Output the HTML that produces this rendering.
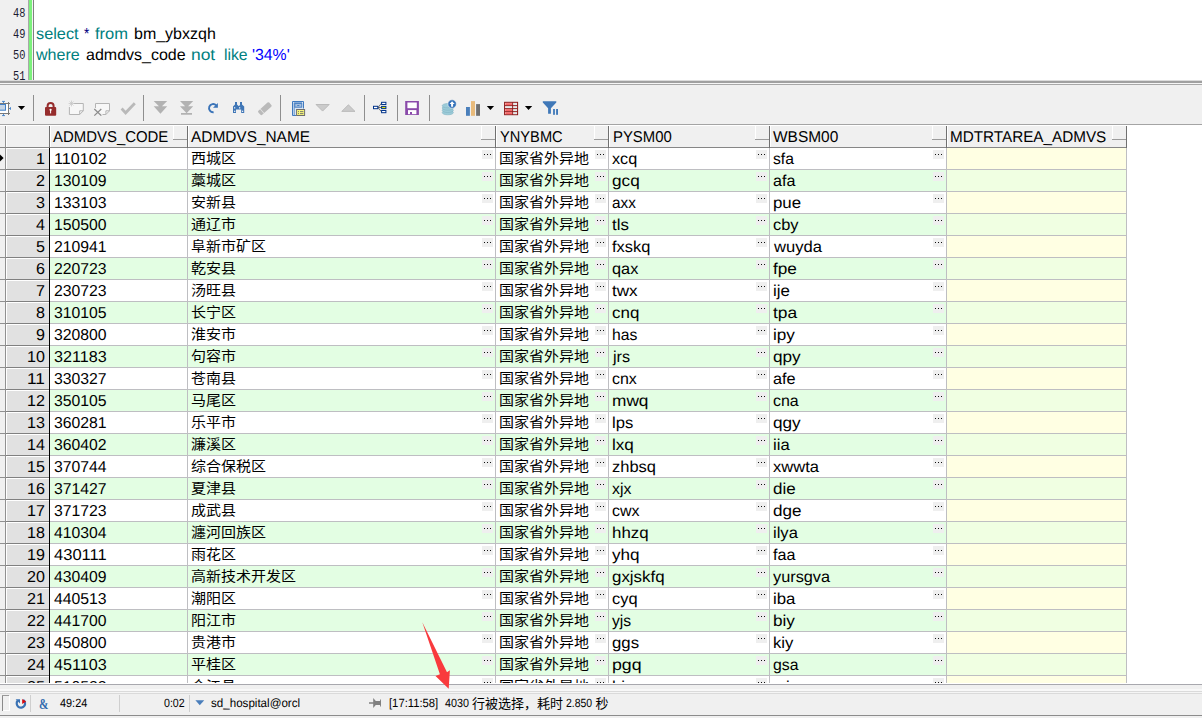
<!DOCTYPE html>
<html lang="zh-CN"><head><meta charset="utf-8"><title>SQL Window</title><style>
html,body{margin:0;padding:0}
body{width:1202px;height:718px;position:relative;overflow:hidden;background:#f0f0f0;font-family:"Liberation Sans","Noto Sans CJK SC",sans-serif}
div,span,svg{position:absolute;display:block}
.t{white-space:nowrap;transform-origin:0 75%}
.m{font-family:"Liberation Mono",monospace;font-size:10px;line-height:12px;color:#1a1a30;transform:scale(1.03,1.2);transform-origin:0 100%}
</style></head><body>
<div style="left:0px;top:0px;width:28px;height:80px;background:#f0f0f0;"></div>
<div style="left:28px;top:0px;width:1px;height:80px;background:#a8a8a8;"></div>
<div style="left:29px;top:0px;width:3px;height:80px;background:#7cf07c;"></div>
<div style="left:32px;top:0px;width:1px;height:80px;background:#f4f4f4;"></div>
<div style="left:33px;top:0px;width:1px;height:80px;background:#808080;"></div>
<div style="left:34px;top:0px;width:1168px;height:80px;background:#fff;"></div>
<span class="t m" style="left:12.6px;top:10.40px">48</span>
<span class="t m" style="left:12.6px;top:31.40px">49</span>
<span class="t m" style="left:12.6px;top:52.40px">50</span>
<span class="t m" style="left:12.6px;top:73.40px">51</span>
<span class="t" style="left:36.10px;top:23px;font-size:16px;line-height:22px;color:#008080;transform:scaleX(1.0180) rotate(.05deg)">select</span>
<span class="t" style="left:83.90px;top:23px;font-size:16px;line-height:22px;color:#000080;transform:scaleX(0.8480) rotate(.05deg)">*</span>
<span class="t" style="left:94.80px;top:23px;font-size:16px;line-height:22px;color:#008080;transform:scaleX(1.0312) rotate(.05deg)">from</span>
<span class="t" style="left:133.80px;top:23px;font-size:16px;line-height:22px;color:#000;transform:scaleX(0.9994) rotate(.05deg)">bm_ybxzqh</span>
<span class="t" style="left:36.35px;top:44px;font-size:16px;line-height:22px;color:#008080;transform:scaleX(1.0034) rotate(.05deg)">where</span>
<span class="t" style="left:85.60px;top:44px;font-size:16px;line-height:22px;color:#000;transform:scaleX(1.0000) rotate(.05deg)">admdvs_code</span>
<span class="t" style="left:190.60px;top:44px;font-size:16px;line-height:22px;color:#008080;transform:scaleX(1.0876) rotate(.05deg)">not</span>
<span class="t" style="left:223.50px;top:44px;font-size:16px;line-height:22px;color:#008080;transform:scaleX(0.9833) rotate(.05deg)">like</span>
<span class="t" style="left:252.30px;top:44px;font-size:16px;line-height:22px;color:#0000ff;transform:scaleX(0.9882) rotate(.05deg)">&#x27;34%&#x27;</span>
<div style="left:0px;top:80px;width:1202px;height:1px;background:#dcdcdc;"></div>
<div style="left:0px;top:81px;width:1202px;height:2px;background:#a0a0a0;"></div>
<div style="left:0px;top:83px;width:1202px;height:1px;background:#f6f6f6;"></div>
<div style="left:0px;top:84px;width:1202px;height:1px;background:#a8a8a8;"></div>
<div style="left:0px;top:85px;width:1202px;height:39px;background:#f0f0f0;"></div>
<div style="left:33px;top:95px;width:1px;height:26px;background:#8e8e8e;"></div>
<div style="left:143px;top:95px;width:1px;height:26px;background:#8e8e8e;"></div>
<div style="left:280px;top:95px;width:1px;height:26px;background:#8e8e8e;"></div>
<div style="left:364px;top:95px;width:1px;height:26px;background:#8e8e8e;"></div>
<div style="left:397px;top:95px;width:1px;height:26px;background:#8e8e8e;"></div>
<div style="left:429px;top:95px;width:1px;height:26px;background:#8e8e8e;"></div>
<svg style="left:0;top:85px" width="600" height="39" viewBox="0 85 600 39">
<!-- fit icon (cut) -->
<rect x="-3" y="103.5" width="11.5" height="10" fill="#fff" stroke="#7a7a7a" stroke-width="1"/>
<path d="M8.5 102v13M0 103.5h10M0 113.5h10" stroke="#7a7a7a" stroke-width="1" fill="none"/>
<rect x="-3" y="104.5" width="8.5" height="5.7" fill="#c5d4e5" stroke="#3f7fc8" stroke-width="1"/>
<path d="M2 101.4h3M3.5 101.4v1.6M2 115.6h3M3.5 114v1.6M10.5 107.2v2.6M9 108.5h1.5" stroke="#3f7fc8" stroke-width="0.9" fill="none"/>
<path d="M17.9 106h7.2l-3.6 4.1z" fill="#000"/>
<!-- lock -->
<path d="M47.6 107.5v-1.6a3 3 0 0 1 6 0v1.6" fill="none" stroke="#962d2d" stroke-width="2"/>
<rect x="45" y="107" width="11.2" height="8.8" rx="1" fill="#962d2d"/>
<circle cx="50.6" cy="109.8" r="1.1" fill="#fff"/><rect x="50.1" y="110" width="1" height="3.4" fill="#fff"/>
<!-- new record (disabled) -->
<path d="M73.5 103.5h9.8v7.3l-3.6 3.7h-10.3v-7.5" fill="#f7f7f7" stroke="#b4b4b4" stroke-width="1"/>
<path d="M83.3 110.8h-3.6v3.7" fill="none" stroke="#b4b4b4" stroke-width="1"/>
<path d="M71.5 100.6v5.8M68.6 103.5h5.8M69.5 101.5l4 4M73.5 101.5l-4 4" stroke="#c4c4c4" stroke-width="0.7"/>
<!-- delete record (disabled) -->
<path d="M95.5 108v-4.5h14v7.3l-3.6 3.7h-3.4" fill="#f7f7f7" stroke="#b4b4b4" stroke-width="1"/>
<path d="M109.5 110.8h-3.6v3.7" fill="none" stroke="#b4b4b4" stroke-width="1"/>
<path d="M94.3 109l7 6.6M101.3 109l-7 6.6" stroke="#8c8c8c" stroke-width="1.3" fill="none"/>
<!-- check -->
<path d="M120.6 109.6l2-2 3 3.2 8.2-8.6 2 2-10.2 10.8z" fill="#b9b9b9"/>
<!-- double down -->
<path d="M153.7 101h13.5l-6.75 6.8zM153.7 106.3h13.5l-6.75 7.4z" fill="#b2b2b2"/>
<path d="M180 101h13.2l-6.6 6.8zM180 106.3h13.2l-6.6 7zM181 112.9h11v1.9h-11z" fill="#b2b2b2"/>
<!-- refresh -->
<path d="M213.6 112.2a4.1 4.1 0 1 1 2.6-6.8" fill="none" stroke="#3b74b8" stroke-width="1.9"/>
<path d="M217.9 102.9v4.9h-4.9z" fill="#3b74b8"/>
<!-- binoculars -->
<path d="M235 102h2v2.4l1.6 1.6h0.4l1-1 0 0V102h2v2.4l2.2 2.2V113h-3v-3.4h-5.2V113h-3v-6.4l2-2.2z" fill="#3f76b6"/>
<rect x="234.1" y="110.7" width="1.2" height="1.2" fill="#fff"/><rect x="242" y="110.7" width="1.2" height="1.2" fill="#fff"/>
<rect x="234.2" y="107" width="1" height="1.6" fill="#e8eef6"/><rect x="239.2" y="107" width="1" height="1.6" fill="#e8eef6"/>
<!-- eraser -->
<g transform="rotate(-42 265 108.7)"><rect x="257.6" y="105.8" width="14.6" height="5.6" rx="1.2" fill="#bababa"/><rect x="260.8" y="105.8" width="0.8" height="5.6" fill="#e6e6e6"/></g>
<!-- single record view -->
<path d="M303.5 108.5v-7h-11v14h3.5" fill="#dbe6f3" stroke="#3f7ac0" stroke-width="1"/>
<path d="M294.2 115v-12.2h7.8" fill="none" stroke="#3f7ac0" stroke-width="0.8"/>
<rect x="294.8" y="103.6" width="7" height="3.6" fill="#a9c1de" stroke="#3f7ac0" stroke-width="0.9"/>
<rect x="297.2" y="105" width="2.2" height="0.9" fill="#3f7ac0"/>
<rect x="296.6" y="109.5" width="8" height="6" fill="#f6f67c" stroke="#6e6e6e" stroke-width="1"/>
<path d="M298 111.6h1M300 111.6h3.4M298 113.6h1M300 113.6h3.4" stroke="#6e6e6e" stroke-width="0.9"/>
<!-- triangles -->
<path d="M316 104.5h13.2l-6.6 6.6z" fill="#cbcbcb" stroke="#b2b2b2" stroke-width="0.8"/>
<path d="M341.8 111.4h13.2l-6.6-6.6z" fill="#cbcbcb" stroke="#b2b2b2" stroke-width="0.8"/>
<!-- tree -->
<path d="M378 107.5l3.4-4.2M378 107.5h3.4M378 107.5l3.4 4.2" stroke="#5a5a5a" stroke-width="0.9" fill="none"/>
<rect x="373.5" y="106.3" width="4.3" height="2.4" fill="#fff" stroke="#00338a" stroke-width="1"/>
<rect x="381.6" y="102.3" width="4.3" height="2.2" fill="#fff" stroke="#00338a" stroke-width="1"/>
<rect x="381.6" y="106.4" width="4.3" height="2.2" fill="#e8e800" stroke="#00338a" stroke-width="1"/>
<rect x="381.6" y="110.5" width="4.3" height="2.2" fill="#fff" stroke="#00338a" stroke-width="1"/>
<!-- save -->
<rect x="405.2" y="101" width="13.7" height="14" fill="#8a4aaa"/>
<rect x="407.4" y="102.5" width="9.4" height="5.7" fill="#fff"/>
<rect x="408" y="110.1" width="8.4" height="4.1" fill="#fff"/>
<rect x="410" y="112" width="2" height="2.2" fill="#8a4aaa"/>
<!-- db upload -->
<g fill="#9ccbd8" stroke="#7fb3c4" stroke-width="0.6"><ellipse cx="447.8" cy="112.6" rx="5.6" ry="2.2"/><ellipse cx="447.8" cy="110.3" rx="5.6" ry="2.2"/><ellipse cx="447.8" cy="108" rx="5.6" ry="2.2"/><ellipse cx="447.8" cy="105.7" rx="5.6" ry="2.2"/></g>
<circle cx="452.1" cy="104" r="4.2" fill="#2f6fb8" stroke="#f0f0f0" stroke-width="0.6"/>
<path d="M452.1 101.2l2.6 2.8h-1.6v2.8h-2v-2.8h-1.6z" fill="#fff"/>
<!-- bar chart -->
<rect x="466" y="107" width="3.9" height="8.8" fill="#4a7fbb"/><rect x="471" y="101.1" width="4" height="14.7" fill="#e9bb7b"/><rect x="476.1" y="104.1" width="3.9" height="11.7" fill="#707070"/>
<path d="M486.8 105.9h7.3l-3.65 4.2z" fill="#000"/>
<!-- table -->
<rect x="504.6" y="102.3" width="13" height="12.4" fill="#f4e4e4" stroke="#8b1414" stroke-width="1"/>
<g fill="#f76464"><rect x="505.4" y="103.2" width="6.6" height="1.9"/><rect x="505.4" y="109.2" width="6.6" height="1.9"/><rect x="505.4" y="112.2" width="6.6" height="1.9"/></g>
<g fill="#e4ecec"><rect x="505.4" y="106.2" width="6.6" height="1.9"/><rect x="513.2" y="103.2" width="3.7" height="1.9"/><rect x="513.2" y="106.2" width="3.7" height="1.9"/><rect x="513.2" y="109.2" width="3.7" height="1.9"/><rect x="513.2" y="112.2" width="3.7" height="1.9"/></g>
<path d="M504.6 105.6h13M504.6 108.6h13M504.6 111.6h13M512.6 102.3v12.4" stroke="#8b1414" stroke-width="0.9"/>
<path d="M524.9 105.9h7.3l-3.65 4.2z" fill="#000"/>
<!-- filter -->
<path d="M542.8 101.2h13.5v1.2l-5.4 5.8v5.6h-2.8v-5.6l-5.3-5.8z" fill="#3f78b8"/>
<rect x="553.1" y="109" width="1.8" height="5.8" fill="#3f78b8"/><rect x="556.1" y="109" width="1.9" height="5.8" fill="#3f78b8"/>
</svg>

<div style="left:0px;top:124px;width:1202px;height:1px;background:#a4a4a4;"></div>
<div style="left:0px;top:125px;width:1202px;height:559px;background:#fff;"></div>
<div style="left:0px;top:125px;width:1127px;height:22px;background:#f0f0f0;"></div>
<div style="left:0px;top:125px;width:1127px;height:1px;background:#fff;"></div>
<div style="left:0px;top:147px;width:1127px;height:1px;background:#868686;"></div>
<div style="left:49px;top:126px;width:1px;height:22px;background:#707070;"></div>
<div style="left:50px;top:126px;width:1px;height:21px;background:#fff;"></div>
<div style="left:187px;top:126px;width:1px;height:22px;background:#707070;"></div>
<div style="left:188px;top:126px;width:1px;height:21px;background:#fff;"></div>
<div style="left:495px;top:126px;width:1px;height:22px;background:#707070;"></div>
<div style="left:496px;top:126px;width:1px;height:21px;background:#fff;"></div>
<div style="left:608px;top:126px;width:1px;height:22px;background:#707070;"></div>
<div style="left:609px;top:126px;width:1px;height:21px;background:#fff;"></div>
<div style="left:769px;top:126px;width:1px;height:22px;background:#707070;"></div>
<div style="left:770px;top:126px;width:1px;height:21px;background:#fff;"></div>
<div style="left:946px;top:126px;width:1px;height:22px;background:#707070;"></div>
<div style="left:947px;top:126px;width:1px;height:21px;background:#fff;"></div>
<div style="left:1126px;top:126px;width:1px;height:22px;background:#707070;"></div>
<div style="left:5px;top:126px;width:1px;height:558px;background:#909090;"></div>
<div style="left:6px;top:126px;width:1px;height:21px;background:#fff;"></div>
<div style="left:173px;top:126px;width:1px;height:13px;background:#fff;"></div>
<div style="left:173px;top:139px;width:14px;height:1px;background:#9c9c9c;"></div>
<div style="left:481px;top:126px;width:1px;height:13px;background:#fff;"></div>
<div style="left:481px;top:139px;width:14px;height:1px;background:#9c9c9c;"></div>
<div style="left:594px;top:126px;width:1px;height:13px;background:#fff;"></div>
<div style="left:594px;top:139px;width:14px;height:1px;background:#9c9c9c;"></div>
<div style="left:755px;top:126px;width:1px;height:13px;background:#fff;"></div>
<div style="left:755px;top:139px;width:14px;height:1px;background:#9c9c9c;"></div>
<div style="left:932px;top:126px;width:1px;height:13px;background:#fff;"></div>
<div style="left:932px;top:139px;width:14px;height:1px;background:#9c9c9c;"></div>
<div style="left:1112px;top:126px;width:1px;height:13px;background:#fff;"></div>
<div style="left:1112px;top:139px;width:14px;height:1px;background:#9c9c9c;"></div>
<span class="t" style="left:53.40px;top:126px;font-size:15.7px;line-height:21px;color:#000;transform:scaleX(0.9518) rotate(.05deg)">ADMDVS_CODE</span>
<span class="t" style="left:191.30px;top:126px;font-size:15.7px;line-height:21px;color:#000;transform:scaleX(0.9821) rotate(.05deg)">ADMDVS_NAME</span>
<span class="t" style="left:499.70px;top:126px;font-size:15.7px;line-height:21px;color:#000;transform:scaleX(0.9338) rotate(.05deg)">YNYBMC</span>
<span class="t" style="left:612.50px;top:126px;font-size:15.7px;line-height:21px;color:#000;transform:scaleX(0.9484) rotate(.05deg)">PYSM00</span>
<span class="t" style="left:773.40px;top:126px;font-size:15.7px;line-height:21px;color:#000;transform:scaleX(0.9857) rotate(.05deg)">WBSM00</span>
<span class="t" style="left:950.40px;top:126px;font-size:15.7px;line-height:21px;color:#000;transform:scaleX(0.9723) rotate(.05deg)">MDTRTAREA_ADMVS</span>
<div class="clip" style="left:0;top:148px;width:1202px;height:535px;overflow:hidden">
<div style="left:0px;top:0px;width:5px;height:21px;background:#f0f0f0;"></div>
<div style="left:6px;top:0px;width:43px;height:21px;background:#e1e1e1;"></div>
<div style="left:6px;top:0px;width:43px;height:1px;background:#fff;"></div>
<div style="left:6px;top:0px;width:1px;height:21px;background:#fff;"></div>
<div style="left:947px;top:0px;width:179px;height:21px;background:#ffffe3;"></div>
<div style="left:0px;top:21px;width:5px;height:1px;background:#909090;"></div>
<div style="left:6px;top:21px;width:43px;height:1px;background:#808080;"></div>
<div style="left:50px;top:21px;width:1077px;height:1px;background:#bebec2;"></div>
<span class="t" style="left:36.29px;top:0px;font-size:15.8px;line-height:21px;color:#000;transform:scaleX(1.0188) rotate(.05deg)">1</span>
<span class="t" style="left:54.00px;top:0px;font-size:15.8px;line-height:21px;color:#000;transform:scaleX(1.0218) rotate(.05deg)">110102</span>
<span class="t c" style="left:190.90px;top:0px;font-size:13.4px;line-height:21px;color:#000;letter-spacing:0px;transform:translateY(0px) scaleX(1.12)">西城区</span>
<span class="t c" style="left:499.40px;top:0px;font-size:13.4px;line-height:21px;color:#000;letter-spacing:0px;transform:translateY(0px) scaleX(1.12)">国家省外异地</span>
<span class="t" style="left:612.30px;top:0px;font-size:15.8px;line-height:21px;color:#000;transform:scaleX(1.0258) rotate(.05deg)">xcq</span>
<span class="t" style="left:773.40px;top:0px;font-size:15.8px;line-height:21px;color:#000;transform:scaleX(0.9924) rotate(.05deg)">sfa</span>
<div style="left:482px;top:2px;width:11px;height:9px;background:#efefef;"></div>
<div style="left:484px;top:6px;width:1.4px;height:1.4px;background:#111;"></div>
<div style="left:487px;top:6px;width:1.4px;height:1.4px;background:#111;"></div>
<div style="left:490px;top:6px;width:1.4px;height:1.4px;background:#111;"></div>
<div style="left:595px;top:2px;width:11px;height:9px;background:#efefef;"></div>
<div style="left:597px;top:6px;width:1.4px;height:1.4px;background:#111;"></div>
<div style="left:600px;top:6px;width:1.4px;height:1.4px;background:#111;"></div>
<div style="left:603px;top:6px;width:1.4px;height:1.4px;background:#111;"></div>
<div style="left:756px;top:2px;width:11px;height:9px;background:#efefef;"></div>
<div style="left:758px;top:6px;width:1.4px;height:1.4px;background:#111;"></div>
<div style="left:761px;top:6px;width:1.4px;height:1.4px;background:#111;"></div>
<div style="left:764px;top:6px;width:1.4px;height:1.4px;background:#111;"></div>
<div style="left:933px;top:2px;width:11px;height:9px;background:#efefef;"></div>
<div style="left:935px;top:6px;width:1.4px;height:1.4px;background:#111;"></div>
<div style="left:938px;top:6px;width:1.4px;height:1.4px;background:#111;"></div>
<div style="left:941px;top:6px;width:1.4px;height:1.4px;background:#111;"></div>
<div style="left:0px;top:22px;width:5px;height:21px;background:#f0f0f0;"></div>
<div style="left:6px;top:22px;width:43px;height:21px;background:#e1e1e1;"></div>
<div style="left:6px;top:22px;width:43px;height:1px;background:#fff;"></div>
<div style="left:6px;top:22px;width:1px;height:21px;background:#fff;"></div>
<div style="left:50px;top:22px;width:896px;height:21px;background:#e3fee3;"></div>
<div style="left:947px;top:22px;width:179px;height:21px;background:#f0ffe2;"></div>
<div style="left:0px;top:43px;width:5px;height:1px;background:#909090;"></div>
<div style="left:6px;top:43px;width:43px;height:1px;background:#808080;"></div>
<div style="left:50px;top:43px;width:1077px;height:1px;background:#bebec2;"></div>
<span class="t" style="left:36.29px;top:22px;font-size:15.8px;line-height:21px;color:#000;transform:scaleX(1.0188) rotate(.05deg)">2</span>
<span class="t" style="left:54.00px;top:22px;font-size:15.8px;line-height:21px;color:#000;transform:scaleX(0.9975) rotate(.05deg)">130109</span>
<span class="t c" style="left:190.90px;top:22px;font-size:13.4px;line-height:21px;color:#000;letter-spacing:0px;transform:translateY(0px) scaleX(1.12)">藁城区</span>
<span class="t c" style="left:499.40px;top:22px;font-size:13.4px;line-height:21px;color:#000;letter-spacing:0px;transform:translateY(0px) scaleX(1.12)">国家省外异地</span>
<span class="t" style="left:612.30px;top:22px;font-size:15.8px;line-height:21px;color:#000;transform:scaleX(1.0876) rotate(.05deg)">gcq</span>
<span class="t" style="left:773.40px;top:22px;font-size:15.8px;line-height:21px;color:#000;transform:scaleX(1.0185) rotate(.05deg)">afa</span>
<div style="left:482px;top:24px;width:11px;height:9px;background:#efefef;"></div>
<div style="left:484px;top:28px;width:1.4px;height:1.4px;background:#111;"></div>
<div style="left:487px;top:28px;width:1.4px;height:1.4px;background:#111;"></div>
<div style="left:490px;top:28px;width:1.4px;height:1.4px;background:#111;"></div>
<div style="left:595px;top:24px;width:11px;height:9px;background:#efefef;"></div>
<div style="left:597px;top:28px;width:1.4px;height:1.4px;background:#111;"></div>
<div style="left:600px;top:28px;width:1.4px;height:1.4px;background:#111;"></div>
<div style="left:603px;top:28px;width:1.4px;height:1.4px;background:#111;"></div>
<div style="left:756px;top:24px;width:11px;height:9px;background:#efefef;"></div>
<div style="left:758px;top:28px;width:1.4px;height:1.4px;background:#111;"></div>
<div style="left:761px;top:28px;width:1.4px;height:1.4px;background:#111;"></div>
<div style="left:764px;top:28px;width:1.4px;height:1.4px;background:#111;"></div>
<div style="left:933px;top:24px;width:11px;height:9px;background:#efefef;"></div>
<div style="left:935px;top:28px;width:1.4px;height:1.4px;background:#111;"></div>
<div style="left:938px;top:28px;width:1.4px;height:1.4px;background:#111;"></div>
<div style="left:941px;top:28px;width:1.4px;height:1.4px;background:#111;"></div>
<div style="left:0px;top:44px;width:5px;height:21px;background:#f0f0f0;"></div>
<div style="left:6px;top:44px;width:43px;height:21px;background:#e1e1e1;"></div>
<div style="left:6px;top:44px;width:43px;height:1px;background:#fff;"></div>
<div style="left:6px;top:44px;width:1px;height:21px;background:#fff;"></div>
<div style="left:947px;top:44px;width:179px;height:21px;background:#ffffe3;"></div>
<div style="left:0px;top:65px;width:5px;height:1px;background:#909090;"></div>
<div style="left:6px;top:65px;width:43px;height:1px;background:#808080;"></div>
<div style="left:50px;top:65px;width:1077px;height:1px;background:#bebec2;"></div>
<span class="t" style="left:36.29px;top:44px;font-size:15.8px;line-height:21px;color:#000;transform:scaleX(1.0188) rotate(.05deg)">3</span>
<span class="t" style="left:54.00px;top:44px;font-size:15.8px;line-height:21px;color:#000;transform:scaleX(0.9975) rotate(.05deg)">133103</span>
<span class="t c" style="left:190.90px;top:44px;font-size:13.4px;line-height:21px;color:#000;letter-spacing:0px;transform:translateY(0px) scaleX(1.12)">安新县</span>
<span class="t c" style="left:499.40px;top:44px;font-size:13.4px;line-height:21px;color:#000;letter-spacing:0px;transform:translateY(0px) scaleX(1.12)">国家省外异地</span>
<span class="t" style="left:612.30px;top:44px;font-size:15.8px;line-height:21px;color:#000;transform:scaleX(0.9701) rotate(.05deg)">axx</span>
<span class="t" style="left:773.40px;top:44px;font-size:15.8px;line-height:21px;color:#000;transform:scaleX(1.0670) rotate(.05deg)">pue</span>
<div style="left:482px;top:46px;width:11px;height:9px;background:#efefef;"></div>
<div style="left:484px;top:50px;width:1.4px;height:1.4px;background:#111;"></div>
<div style="left:487px;top:50px;width:1.4px;height:1.4px;background:#111;"></div>
<div style="left:490px;top:50px;width:1.4px;height:1.4px;background:#111;"></div>
<div style="left:595px;top:46px;width:11px;height:9px;background:#efefef;"></div>
<div style="left:597px;top:50px;width:1.4px;height:1.4px;background:#111;"></div>
<div style="left:600px;top:50px;width:1.4px;height:1.4px;background:#111;"></div>
<div style="left:603px;top:50px;width:1.4px;height:1.4px;background:#111;"></div>
<div style="left:756px;top:46px;width:11px;height:9px;background:#efefef;"></div>
<div style="left:758px;top:50px;width:1.4px;height:1.4px;background:#111;"></div>
<div style="left:761px;top:50px;width:1.4px;height:1.4px;background:#111;"></div>
<div style="left:764px;top:50px;width:1.4px;height:1.4px;background:#111;"></div>
<div style="left:933px;top:46px;width:11px;height:9px;background:#efefef;"></div>
<div style="left:935px;top:50px;width:1.4px;height:1.4px;background:#111;"></div>
<div style="left:938px;top:50px;width:1.4px;height:1.4px;background:#111;"></div>
<div style="left:941px;top:50px;width:1.4px;height:1.4px;background:#111;"></div>
<div style="left:0px;top:66px;width:5px;height:21px;background:#f0f0f0;"></div>
<div style="left:6px;top:66px;width:43px;height:21px;background:#e1e1e1;"></div>
<div style="left:6px;top:66px;width:43px;height:1px;background:#fff;"></div>
<div style="left:6px;top:66px;width:1px;height:21px;background:#fff;"></div>
<div style="left:50px;top:66px;width:896px;height:21px;background:#e3fee3;"></div>
<div style="left:947px;top:66px;width:179px;height:21px;background:#f0ffe2;"></div>
<div style="left:0px;top:87px;width:5px;height:1px;background:#909090;"></div>
<div style="left:6px;top:87px;width:43px;height:1px;background:#808080;"></div>
<div style="left:50px;top:87px;width:1077px;height:1px;background:#bebec2;"></div>
<span class="t" style="left:36.29px;top:66px;font-size:15.8px;line-height:21px;color:#000;transform:scaleX(1.0188) rotate(.05deg)">4</span>
<span class="t" style="left:54.00px;top:66px;font-size:15.8px;line-height:21px;color:#000;transform:scaleX(0.9975) rotate(.05deg)">150500</span>
<span class="t c" style="left:190.90px;top:66px;font-size:13.4px;line-height:21px;color:#000;letter-spacing:0px;transform:translateY(0px) scaleX(1.12)">通辽市</span>
<span class="t c" style="left:499.40px;top:66px;font-size:13.4px;line-height:21px;color:#000;letter-spacing:0px;transform:translateY(0px) scaleX(1.12)">国家省外异地</span>
<span class="t" style="left:612.30px;top:66px;font-size:15.8px;line-height:21px;color:#000;transform:scaleX(1.0681) rotate(.05deg)">tls</span>
<span class="t" style="left:773.40px;top:66px;font-size:15.8px;line-height:21px;color:#000;transform:scaleX(1.0395) rotate(.05deg)">cby</span>
<div style="left:482px;top:68px;width:11px;height:9px;background:#efefef;"></div>
<div style="left:484px;top:72px;width:1.4px;height:1.4px;background:#111;"></div>
<div style="left:487px;top:72px;width:1.4px;height:1.4px;background:#111;"></div>
<div style="left:490px;top:72px;width:1.4px;height:1.4px;background:#111;"></div>
<div style="left:595px;top:68px;width:11px;height:9px;background:#efefef;"></div>
<div style="left:597px;top:72px;width:1.4px;height:1.4px;background:#111;"></div>
<div style="left:600px;top:72px;width:1.4px;height:1.4px;background:#111;"></div>
<div style="left:603px;top:72px;width:1.4px;height:1.4px;background:#111;"></div>
<div style="left:756px;top:68px;width:11px;height:9px;background:#efefef;"></div>
<div style="left:758px;top:72px;width:1.4px;height:1.4px;background:#111;"></div>
<div style="left:761px;top:72px;width:1.4px;height:1.4px;background:#111;"></div>
<div style="left:764px;top:72px;width:1.4px;height:1.4px;background:#111;"></div>
<div style="left:933px;top:68px;width:11px;height:9px;background:#efefef;"></div>
<div style="left:935px;top:72px;width:1.4px;height:1.4px;background:#111;"></div>
<div style="left:938px;top:72px;width:1.4px;height:1.4px;background:#111;"></div>
<div style="left:941px;top:72px;width:1.4px;height:1.4px;background:#111;"></div>
<div style="left:0px;top:88px;width:5px;height:21px;background:#f0f0f0;"></div>
<div style="left:6px;top:88px;width:43px;height:21px;background:#e1e1e1;"></div>
<div style="left:6px;top:88px;width:43px;height:1px;background:#fff;"></div>
<div style="left:6px;top:88px;width:1px;height:21px;background:#fff;"></div>
<div style="left:947px;top:88px;width:179px;height:21px;background:#ffffe3;"></div>
<div style="left:0px;top:109px;width:5px;height:1px;background:#909090;"></div>
<div style="left:6px;top:109px;width:43px;height:1px;background:#808080;"></div>
<div style="left:50px;top:109px;width:1077px;height:1px;background:#bebec2;"></div>
<span class="t" style="left:36.29px;top:88px;font-size:15.8px;line-height:21px;color:#000;transform:scaleX(1.0188) rotate(.05deg)">5</span>
<span class="t" style="left:54.00px;top:88px;font-size:15.8px;line-height:21px;color:#000;transform:scaleX(0.9975) rotate(.05deg)">210941</span>
<span class="t c" style="left:190.90px;top:88px;font-size:13.4px;line-height:21px;color:#000;letter-spacing:0px;transform:translateY(0px) scaleX(1.12)">阜新市矿区</span>
<span class="t c" style="left:499.40px;top:88px;font-size:13.4px;line-height:21px;color:#000;letter-spacing:0px;transform:translateY(0px) scaleX(1.12)">国家省外异地</span>
<span class="t" style="left:612.30px;top:88px;font-size:15.8px;line-height:21px;color:#000;transform:scaleX(1.0379) rotate(.05deg)">fxskq</span>
<span class="t" style="left:773.66px;top:88px;font-size:15.8px;line-height:21px;color:#000;transform:scaleX(1.0498) rotate(.05deg)">wuyda</span>
<div style="left:482px;top:90px;width:11px;height:9px;background:#efefef;"></div>
<div style="left:484px;top:94px;width:1.4px;height:1.4px;background:#111;"></div>
<div style="left:487px;top:94px;width:1.4px;height:1.4px;background:#111;"></div>
<div style="left:490px;top:94px;width:1.4px;height:1.4px;background:#111;"></div>
<div style="left:595px;top:90px;width:11px;height:9px;background:#efefef;"></div>
<div style="left:597px;top:94px;width:1.4px;height:1.4px;background:#111;"></div>
<div style="left:600px;top:94px;width:1.4px;height:1.4px;background:#111;"></div>
<div style="left:603px;top:94px;width:1.4px;height:1.4px;background:#111;"></div>
<div style="left:756px;top:90px;width:11px;height:9px;background:#efefef;"></div>
<div style="left:758px;top:94px;width:1.4px;height:1.4px;background:#111;"></div>
<div style="left:761px;top:94px;width:1.4px;height:1.4px;background:#111;"></div>
<div style="left:764px;top:94px;width:1.4px;height:1.4px;background:#111;"></div>
<div style="left:933px;top:90px;width:11px;height:9px;background:#efefef;"></div>
<div style="left:935px;top:94px;width:1.4px;height:1.4px;background:#111;"></div>
<div style="left:938px;top:94px;width:1.4px;height:1.4px;background:#111;"></div>
<div style="left:941px;top:94px;width:1.4px;height:1.4px;background:#111;"></div>
<div style="left:0px;top:110px;width:5px;height:21px;background:#f0f0f0;"></div>
<div style="left:6px;top:110px;width:43px;height:21px;background:#e1e1e1;"></div>
<div style="left:6px;top:110px;width:43px;height:1px;background:#fff;"></div>
<div style="left:6px;top:110px;width:1px;height:21px;background:#fff;"></div>
<div style="left:50px;top:110px;width:896px;height:21px;background:#e3fee3;"></div>
<div style="left:947px;top:110px;width:179px;height:21px;background:#f0ffe2;"></div>
<div style="left:0px;top:131px;width:5px;height:1px;background:#909090;"></div>
<div style="left:6px;top:131px;width:43px;height:1px;background:#808080;"></div>
<div style="left:50px;top:131px;width:1077px;height:1px;background:#bebec2;"></div>
<span class="t" style="left:36.29px;top:110px;font-size:15.8px;line-height:21px;color:#000;transform:scaleX(1.0188) rotate(.05deg)">6</span>
<span class="t" style="left:54.00px;top:110px;font-size:15.8px;line-height:21px;color:#000;transform:scaleX(0.9975) rotate(.05deg)">220723</span>
<span class="t c" style="left:190.90px;top:110px;font-size:13.4px;line-height:21px;color:#000;letter-spacing:0px;transform:translateY(0px) scaleX(1.12)">乾安县</span>
<span class="t c" style="left:499.40px;top:110px;font-size:13.4px;line-height:21px;color:#000;letter-spacing:0px;transform:translateY(0px) scaleX(1.12)">国家省外异地</span>
<span class="t" style="left:612.30px;top:110px;font-size:15.8px;line-height:21px;color:#000;transform:scaleX(1.0331) rotate(.05deg)">qax</span>
<span class="t" style="left:773.40px;top:110px;font-size:15.8px;line-height:21px;color:#000;transform:scaleX(1.0897) rotate(.05deg)">fpe</span>
<div style="left:482px;top:112px;width:11px;height:9px;background:#efefef;"></div>
<div style="left:484px;top:116px;width:1.4px;height:1.4px;background:#111;"></div>
<div style="left:487px;top:116px;width:1.4px;height:1.4px;background:#111;"></div>
<div style="left:490px;top:116px;width:1.4px;height:1.4px;background:#111;"></div>
<div style="left:595px;top:112px;width:11px;height:9px;background:#efefef;"></div>
<div style="left:597px;top:116px;width:1.4px;height:1.4px;background:#111;"></div>
<div style="left:600px;top:116px;width:1.4px;height:1.4px;background:#111;"></div>
<div style="left:603px;top:116px;width:1.4px;height:1.4px;background:#111;"></div>
<div style="left:756px;top:112px;width:11px;height:9px;background:#efefef;"></div>
<div style="left:758px;top:116px;width:1.4px;height:1.4px;background:#111;"></div>
<div style="left:761px;top:116px;width:1.4px;height:1.4px;background:#111;"></div>
<div style="left:764px;top:116px;width:1.4px;height:1.4px;background:#111;"></div>
<div style="left:933px;top:112px;width:11px;height:9px;background:#efefef;"></div>
<div style="left:935px;top:116px;width:1.4px;height:1.4px;background:#111;"></div>
<div style="left:938px;top:116px;width:1.4px;height:1.4px;background:#111;"></div>
<div style="left:941px;top:116px;width:1.4px;height:1.4px;background:#111;"></div>
<div style="left:0px;top:132px;width:5px;height:21px;background:#f0f0f0;"></div>
<div style="left:6px;top:132px;width:43px;height:21px;background:#e1e1e1;"></div>
<div style="left:6px;top:132px;width:43px;height:1px;background:#fff;"></div>
<div style="left:6px;top:132px;width:1px;height:21px;background:#fff;"></div>
<div style="left:947px;top:132px;width:179px;height:21px;background:#ffffe3;"></div>
<div style="left:0px;top:153px;width:5px;height:1px;background:#909090;"></div>
<div style="left:6px;top:153px;width:43px;height:1px;background:#808080;"></div>
<div style="left:50px;top:153px;width:1077px;height:1px;background:#bebec2;"></div>
<span class="t" style="left:36.29px;top:132px;font-size:15.8px;line-height:21px;color:#000;transform:scaleX(1.0188) rotate(.05deg)">7</span>
<span class="t" style="left:54.00px;top:132px;font-size:15.8px;line-height:21px;color:#000;transform:scaleX(0.9975) rotate(.05deg)">230723</span>
<span class="t c" style="left:190.90px;top:132px;font-size:13.4px;line-height:21px;color:#000;letter-spacing:0px;transform:translateY(0px) scaleX(1.12)">汤旺县</span>
<span class="t c" style="left:499.40px;top:132px;font-size:13.4px;line-height:21px;color:#000;letter-spacing:0px;transform:translateY(0px) scaleX(1.12)">国家省外异地</span>
<span class="t" style="left:612.30px;top:132px;font-size:15.8px;line-height:21px;color:#000;transform:scaleX(1.0811) rotate(.05deg)">twx</span>
<span class="t" style="left:773.40px;top:132px;font-size:15.8px;line-height:21px;color:#000;transform:scaleX(1.0696) rotate(.05deg)">ije</span>
<div style="left:482px;top:134px;width:11px;height:9px;background:#efefef;"></div>
<div style="left:484px;top:138px;width:1.4px;height:1.4px;background:#111;"></div>
<div style="left:487px;top:138px;width:1.4px;height:1.4px;background:#111;"></div>
<div style="left:490px;top:138px;width:1.4px;height:1.4px;background:#111;"></div>
<div style="left:595px;top:134px;width:11px;height:9px;background:#efefef;"></div>
<div style="left:597px;top:138px;width:1.4px;height:1.4px;background:#111;"></div>
<div style="left:600px;top:138px;width:1.4px;height:1.4px;background:#111;"></div>
<div style="left:603px;top:138px;width:1.4px;height:1.4px;background:#111;"></div>
<div style="left:756px;top:134px;width:11px;height:9px;background:#efefef;"></div>
<div style="left:758px;top:138px;width:1.4px;height:1.4px;background:#111;"></div>
<div style="left:761px;top:138px;width:1.4px;height:1.4px;background:#111;"></div>
<div style="left:764px;top:138px;width:1.4px;height:1.4px;background:#111;"></div>
<div style="left:933px;top:134px;width:11px;height:9px;background:#efefef;"></div>
<div style="left:935px;top:138px;width:1.4px;height:1.4px;background:#111;"></div>
<div style="left:938px;top:138px;width:1.4px;height:1.4px;background:#111;"></div>
<div style="left:941px;top:138px;width:1.4px;height:1.4px;background:#111;"></div>
<div style="left:0px;top:154px;width:5px;height:21px;background:#f0f0f0;"></div>
<div style="left:6px;top:154px;width:43px;height:21px;background:#e1e1e1;"></div>
<div style="left:6px;top:154px;width:43px;height:1px;background:#fff;"></div>
<div style="left:6px;top:154px;width:1px;height:21px;background:#fff;"></div>
<div style="left:50px;top:154px;width:896px;height:21px;background:#e3fee3;"></div>
<div style="left:947px;top:154px;width:179px;height:21px;background:#f0ffe2;"></div>
<div style="left:0px;top:175px;width:5px;height:1px;background:#909090;"></div>
<div style="left:6px;top:175px;width:43px;height:1px;background:#808080;"></div>
<div style="left:50px;top:175px;width:1077px;height:1px;background:#bebec2;"></div>
<span class="t" style="left:36.29px;top:154px;font-size:15.8px;line-height:21px;color:#000;transform:scaleX(1.0188) rotate(.05deg)">8</span>
<span class="t" style="left:54.00px;top:154px;font-size:15.8px;line-height:21px;color:#000;transform:scaleX(0.9975) rotate(.05deg)">310105</span>
<span class="t c" style="left:190.90px;top:154px;font-size:13.4px;line-height:21px;color:#000;letter-spacing:0px;transform:translateY(0px) scaleX(1.12)">长宁区</span>
<span class="t c" style="left:499.40px;top:154px;font-size:13.4px;line-height:21px;color:#000;letter-spacing:0px;transform:translateY(0px) scaleX(1.12)">国家省外异地</span>
<span class="t" style="left:612.30px;top:154px;font-size:15.8px;line-height:21px;color:#000;transform:scaleX(1.0727) rotate(.05deg)">cnq</span>
<span class="t" style="left:773.40px;top:154px;font-size:15.8px;line-height:21px;color:#000;transform:scaleX(1.0993) rotate(.05deg)">tpa</span>
<div style="left:482px;top:156px;width:11px;height:9px;background:#efefef;"></div>
<div style="left:484px;top:160px;width:1.4px;height:1.4px;background:#111;"></div>
<div style="left:487px;top:160px;width:1.4px;height:1.4px;background:#111;"></div>
<div style="left:490px;top:160px;width:1.4px;height:1.4px;background:#111;"></div>
<div style="left:595px;top:156px;width:11px;height:9px;background:#efefef;"></div>
<div style="left:597px;top:160px;width:1.4px;height:1.4px;background:#111;"></div>
<div style="left:600px;top:160px;width:1.4px;height:1.4px;background:#111;"></div>
<div style="left:603px;top:160px;width:1.4px;height:1.4px;background:#111;"></div>
<div style="left:756px;top:156px;width:11px;height:9px;background:#efefef;"></div>
<div style="left:758px;top:160px;width:1.4px;height:1.4px;background:#111;"></div>
<div style="left:761px;top:160px;width:1.4px;height:1.4px;background:#111;"></div>
<div style="left:764px;top:160px;width:1.4px;height:1.4px;background:#111;"></div>
<div style="left:933px;top:156px;width:11px;height:9px;background:#efefef;"></div>
<div style="left:935px;top:160px;width:1.4px;height:1.4px;background:#111;"></div>
<div style="left:938px;top:160px;width:1.4px;height:1.4px;background:#111;"></div>
<div style="left:941px;top:160px;width:1.4px;height:1.4px;background:#111;"></div>
<div style="left:0px;top:176px;width:5px;height:21px;background:#f0f0f0;"></div>
<div style="left:6px;top:176px;width:43px;height:21px;background:#e1e1e1;"></div>
<div style="left:6px;top:176px;width:43px;height:1px;background:#fff;"></div>
<div style="left:6px;top:176px;width:1px;height:21px;background:#fff;"></div>
<div style="left:947px;top:176px;width:179px;height:21px;background:#ffffe3;"></div>
<div style="left:0px;top:197px;width:5px;height:1px;background:#909090;"></div>
<div style="left:6px;top:197px;width:43px;height:1px;background:#808080;"></div>
<div style="left:50px;top:197px;width:1077px;height:1px;background:#bebec2;"></div>
<span class="t" style="left:36.29px;top:176px;font-size:15.8px;line-height:21px;color:#000;transform:scaleX(1.0188) rotate(.05deg)">9</span>
<span class="t" style="left:54.00px;top:176px;font-size:15.8px;line-height:21px;color:#000;transform:scaleX(0.9975) rotate(.05deg)">320800</span>
<span class="t c" style="left:190.90px;top:176px;font-size:13.4px;line-height:21px;color:#000;letter-spacing:0px;transform:translateY(0px) scaleX(1.12)">淮安市</span>
<span class="t c" style="left:499.40px;top:176px;font-size:13.4px;line-height:21px;color:#000;letter-spacing:0px;transform:translateY(0px) scaleX(1.12)">国家省外异地</span>
<span class="t" style="left:612.30px;top:176px;font-size:15.8px;line-height:21px;color:#000;transform:scaleX(0.9952) rotate(.05deg)">has</span>
<span class="t" style="left:773.40px;top:176px;font-size:15.8px;line-height:21px;color:#000;transform:scaleX(1.0854) rotate(.05deg)">ipy</span>
<div style="left:482px;top:178px;width:11px;height:9px;background:#efefef;"></div>
<div style="left:484px;top:182px;width:1.4px;height:1.4px;background:#111;"></div>
<div style="left:487px;top:182px;width:1.4px;height:1.4px;background:#111;"></div>
<div style="left:490px;top:182px;width:1.4px;height:1.4px;background:#111;"></div>
<div style="left:595px;top:178px;width:11px;height:9px;background:#efefef;"></div>
<div style="left:597px;top:182px;width:1.4px;height:1.4px;background:#111;"></div>
<div style="left:600px;top:182px;width:1.4px;height:1.4px;background:#111;"></div>
<div style="left:603px;top:182px;width:1.4px;height:1.4px;background:#111;"></div>
<div style="left:756px;top:178px;width:11px;height:9px;background:#efefef;"></div>
<div style="left:758px;top:182px;width:1.4px;height:1.4px;background:#111;"></div>
<div style="left:761px;top:182px;width:1.4px;height:1.4px;background:#111;"></div>
<div style="left:764px;top:182px;width:1.4px;height:1.4px;background:#111;"></div>
<div style="left:933px;top:178px;width:11px;height:9px;background:#efefef;"></div>
<div style="left:935px;top:182px;width:1.4px;height:1.4px;background:#111;"></div>
<div style="left:938px;top:182px;width:1.4px;height:1.4px;background:#111;"></div>
<div style="left:941px;top:182px;width:1.4px;height:1.4px;background:#111;"></div>
<div style="left:0px;top:198px;width:5px;height:21px;background:#f0f0f0;"></div>
<div style="left:6px;top:198px;width:43px;height:21px;background:#e1e1e1;"></div>
<div style="left:6px;top:198px;width:43px;height:1px;background:#fff;"></div>
<div style="left:6px;top:198px;width:1px;height:21px;background:#fff;"></div>
<div style="left:50px;top:198px;width:896px;height:21px;background:#e3fee3;"></div>
<div style="left:947px;top:198px;width:179px;height:21px;background:#f0ffe2;"></div>
<div style="left:0px;top:219px;width:5px;height:1px;background:#909090;"></div>
<div style="left:6px;top:219px;width:43px;height:1px;background:#808080;"></div>
<div style="left:50px;top:219px;width:1077px;height:1px;background:#bebec2;"></div>
<span class="t" style="left:27.37px;top:198px;font-size:15.8px;line-height:21px;color:#000;transform:scaleX(1.0188) rotate(.05deg)">10</span>
<span class="t" style="left:54.00px;top:198px;font-size:15.8px;line-height:21px;color:#000;transform:scaleX(1.0218) rotate(.05deg)">321183</span>
<span class="t c" style="left:190.90px;top:198px;font-size:13.4px;line-height:21px;color:#000;letter-spacing:0px;transform:translateY(0px) scaleX(1.12)">句容市</span>
<span class="t c" style="left:499.40px;top:198px;font-size:13.4px;line-height:21px;color:#000;letter-spacing:0px;transform:translateY(0px) scaleX(1.12)">国家省外异地</span>
<span class="t" style="left:612.81px;top:198px;font-size:15.8px;line-height:21px;color:#000;transform:scaleX(1.0248) rotate(.05deg)">jrs</span>
<span class="t" style="left:773.40px;top:198px;font-size:15.8px;line-height:21px;color:#000;transform:scaleX(1.0881) rotate(.05deg)">qpy</span>
<div style="left:482px;top:200px;width:11px;height:9px;background:#efefef;"></div>
<div style="left:484px;top:204px;width:1.4px;height:1.4px;background:#111;"></div>
<div style="left:487px;top:204px;width:1.4px;height:1.4px;background:#111;"></div>
<div style="left:490px;top:204px;width:1.4px;height:1.4px;background:#111;"></div>
<div style="left:595px;top:200px;width:11px;height:9px;background:#efefef;"></div>
<div style="left:597px;top:204px;width:1.4px;height:1.4px;background:#111;"></div>
<div style="left:600px;top:204px;width:1.4px;height:1.4px;background:#111;"></div>
<div style="left:603px;top:204px;width:1.4px;height:1.4px;background:#111;"></div>
<div style="left:756px;top:200px;width:11px;height:9px;background:#efefef;"></div>
<div style="left:758px;top:204px;width:1.4px;height:1.4px;background:#111;"></div>
<div style="left:761px;top:204px;width:1.4px;height:1.4px;background:#111;"></div>
<div style="left:764px;top:204px;width:1.4px;height:1.4px;background:#111;"></div>
<div style="left:933px;top:200px;width:11px;height:9px;background:#efefef;"></div>
<div style="left:935px;top:204px;width:1.4px;height:1.4px;background:#111;"></div>
<div style="left:938px;top:204px;width:1.4px;height:1.4px;background:#111;"></div>
<div style="left:941px;top:204px;width:1.4px;height:1.4px;background:#111;"></div>
<div style="left:0px;top:220px;width:5px;height:21px;background:#f0f0f0;"></div>
<div style="left:6px;top:220px;width:43px;height:21px;background:#e1e1e1;"></div>
<div style="left:6px;top:220px;width:43px;height:1px;background:#fff;"></div>
<div style="left:6px;top:220px;width:1px;height:21px;background:#fff;"></div>
<div style="left:947px;top:220px;width:179px;height:21px;background:#ffffe3;"></div>
<div style="left:0px;top:241px;width:5px;height:1px;background:#909090;"></div>
<div style="left:6px;top:241px;width:43px;height:1px;background:#808080;"></div>
<div style="left:50px;top:241px;width:1077px;height:1px;background:#bebec2;"></div>
<span class="t" style="left:27.46px;top:220px;font-size:15.8px;line-height:21px;color:#000;transform:scaleX(1.0916) rotate(.05deg)">11</span>
<span class="t" style="left:54.00px;top:220px;font-size:15.8px;line-height:21px;color:#000;transform:scaleX(0.9975) rotate(.05deg)">330327</span>
<span class="t c" style="left:190.90px;top:220px;font-size:13.4px;line-height:21px;color:#000;letter-spacing:0px;transform:translateY(0px) scaleX(1.12)">苍南县</span>
<span class="t c" style="left:499.40px;top:220px;font-size:13.4px;line-height:21px;color:#000;letter-spacing:0px;transform:translateY(0px) scaleX(1.12)">国家省外异地</span>
<span class="t" style="left:612.30px;top:220px;font-size:15.8px;line-height:21px;color:#000;transform:scaleX(1.0106) rotate(.05deg)">cnx</span>
<span class="t" style="left:773.40px;top:220px;font-size:15.8px;line-height:21px;color:#000;transform:scaleX(1.0292) rotate(.05deg)">afe</span>
<div style="left:482px;top:222px;width:11px;height:9px;background:#efefef;"></div>
<div style="left:484px;top:226px;width:1.4px;height:1.4px;background:#111;"></div>
<div style="left:487px;top:226px;width:1.4px;height:1.4px;background:#111;"></div>
<div style="left:490px;top:226px;width:1.4px;height:1.4px;background:#111;"></div>
<div style="left:595px;top:222px;width:11px;height:9px;background:#efefef;"></div>
<div style="left:597px;top:226px;width:1.4px;height:1.4px;background:#111;"></div>
<div style="left:600px;top:226px;width:1.4px;height:1.4px;background:#111;"></div>
<div style="left:603px;top:226px;width:1.4px;height:1.4px;background:#111;"></div>
<div style="left:756px;top:222px;width:11px;height:9px;background:#efefef;"></div>
<div style="left:758px;top:226px;width:1.4px;height:1.4px;background:#111;"></div>
<div style="left:761px;top:226px;width:1.4px;height:1.4px;background:#111;"></div>
<div style="left:764px;top:226px;width:1.4px;height:1.4px;background:#111;"></div>
<div style="left:933px;top:222px;width:11px;height:9px;background:#efefef;"></div>
<div style="left:935px;top:226px;width:1.4px;height:1.4px;background:#111;"></div>
<div style="left:938px;top:226px;width:1.4px;height:1.4px;background:#111;"></div>
<div style="left:941px;top:226px;width:1.4px;height:1.4px;background:#111;"></div>
<div style="left:0px;top:242px;width:5px;height:21px;background:#f0f0f0;"></div>
<div style="left:6px;top:242px;width:43px;height:21px;background:#e1e1e1;"></div>
<div style="left:6px;top:242px;width:43px;height:1px;background:#fff;"></div>
<div style="left:6px;top:242px;width:1px;height:21px;background:#fff;"></div>
<div style="left:50px;top:242px;width:896px;height:21px;background:#e3fee3;"></div>
<div style="left:947px;top:242px;width:179px;height:21px;background:#f0ffe2;"></div>
<div style="left:0px;top:263px;width:5px;height:1px;background:#909090;"></div>
<div style="left:6px;top:263px;width:43px;height:1px;background:#808080;"></div>
<div style="left:50px;top:263px;width:1077px;height:1px;background:#bebec2;"></div>
<span class="t" style="left:27.37px;top:242px;font-size:15.8px;line-height:21px;color:#000;transform:scaleX(1.0188) rotate(.05deg)">12</span>
<span class="t" style="left:54.00px;top:242px;font-size:15.8px;line-height:21px;color:#000;transform:scaleX(0.9975) rotate(.05deg)">350105</span>
<span class="t c" style="left:190.90px;top:242px;font-size:13.4px;line-height:21px;color:#000;letter-spacing:0px;transform:translateY(0px) scaleX(1.12)">马尾区</span>
<span class="t c" style="left:499.40px;top:242px;font-size:13.4px;line-height:21px;color:#000;letter-spacing:0px;transform:translateY(0px) scaleX(1.12)">国家省外异地</span>
<span class="t" style="left:612.30px;top:242px;font-size:15.8px;line-height:21px;color:#000;transform:scaleX(1.0937) rotate(.05deg)">mwq</span>
<span class="t" style="left:773.40px;top:242px;font-size:15.8px;line-height:21px;color:#000;transform:scaleX(1.0101) rotate(.05deg)">cna</span>
<div style="left:482px;top:244px;width:11px;height:9px;background:#efefef;"></div>
<div style="left:484px;top:248px;width:1.4px;height:1.4px;background:#111;"></div>
<div style="left:487px;top:248px;width:1.4px;height:1.4px;background:#111;"></div>
<div style="left:490px;top:248px;width:1.4px;height:1.4px;background:#111;"></div>
<div style="left:595px;top:244px;width:11px;height:9px;background:#efefef;"></div>
<div style="left:597px;top:248px;width:1.4px;height:1.4px;background:#111;"></div>
<div style="left:600px;top:248px;width:1.4px;height:1.4px;background:#111;"></div>
<div style="left:603px;top:248px;width:1.4px;height:1.4px;background:#111;"></div>
<div style="left:756px;top:244px;width:11px;height:9px;background:#efefef;"></div>
<div style="left:758px;top:248px;width:1.4px;height:1.4px;background:#111;"></div>
<div style="left:761px;top:248px;width:1.4px;height:1.4px;background:#111;"></div>
<div style="left:764px;top:248px;width:1.4px;height:1.4px;background:#111;"></div>
<div style="left:933px;top:244px;width:11px;height:9px;background:#efefef;"></div>
<div style="left:935px;top:248px;width:1.4px;height:1.4px;background:#111;"></div>
<div style="left:938px;top:248px;width:1.4px;height:1.4px;background:#111;"></div>
<div style="left:941px;top:248px;width:1.4px;height:1.4px;background:#111;"></div>
<div style="left:0px;top:264px;width:5px;height:21px;background:#f0f0f0;"></div>
<div style="left:6px;top:264px;width:43px;height:21px;background:#e1e1e1;"></div>
<div style="left:6px;top:264px;width:43px;height:1px;background:#fff;"></div>
<div style="left:6px;top:264px;width:1px;height:21px;background:#fff;"></div>
<div style="left:947px;top:264px;width:179px;height:21px;background:#ffffe3;"></div>
<div style="left:0px;top:285px;width:5px;height:1px;background:#909090;"></div>
<div style="left:6px;top:285px;width:43px;height:1px;background:#808080;"></div>
<div style="left:50px;top:285px;width:1077px;height:1px;background:#bebec2;"></div>
<span class="t" style="left:27.37px;top:264px;font-size:15.8px;line-height:21px;color:#000;transform:scaleX(1.0188) rotate(.05deg)">13</span>
<span class="t" style="left:54.00px;top:264px;font-size:15.8px;line-height:21px;color:#000;transform:scaleX(0.9975) rotate(.05deg)">360281</span>
<span class="t c" style="left:190.90px;top:264px;font-size:13.4px;line-height:21px;color:#000;letter-spacing:0px;transform:translateY(0px) scaleX(1.12)">乐平市</span>
<span class="t c" style="left:499.40px;top:264px;font-size:13.4px;line-height:21px;color:#000;letter-spacing:0px;transform:translateY(0px) scaleX(1.12)">国家省外异地</span>
<span class="t" style="left:612.30px;top:264px;font-size:15.8px;line-height:21px;color:#000;transform:scaleX(1.0530) rotate(.05deg)">lps</span>
<span class="t" style="left:773.40px;top:264px;font-size:15.8px;line-height:21px;color:#000;transform:scaleX(1.0881) rotate(.05deg)">qgy</span>
<div style="left:482px;top:266px;width:11px;height:9px;background:#efefef;"></div>
<div style="left:484px;top:270px;width:1.4px;height:1.4px;background:#111;"></div>
<div style="left:487px;top:270px;width:1.4px;height:1.4px;background:#111;"></div>
<div style="left:490px;top:270px;width:1.4px;height:1.4px;background:#111;"></div>
<div style="left:595px;top:266px;width:11px;height:9px;background:#efefef;"></div>
<div style="left:597px;top:270px;width:1.4px;height:1.4px;background:#111;"></div>
<div style="left:600px;top:270px;width:1.4px;height:1.4px;background:#111;"></div>
<div style="left:603px;top:270px;width:1.4px;height:1.4px;background:#111;"></div>
<div style="left:756px;top:266px;width:11px;height:9px;background:#efefef;"></div>
<div style="left:758px;top:270px;width:1.4px;height:1.4px;background:#111;"></div>
<div style="left:761px;top:270px;width:1.4px;height:1.4px;background:#111;"></div>
<div style="left:764px;top:270px;width:1.4px;height:1.4px;background:#111;"></div>
<div style="left:933px;top:266px;width:11px;height:9px;background:#efefef;"></div>
<div style="left:935px;top:270px;width:1.4px;height:1.4px;background:#111;"></div>
<div style="left:938px;top:270px;width:1.4px;height:1.4px;background:#111;"></div>
<div style="left:941px;top:270px;width:1.4px;height:1.4px;background:#111;"></div>
<div style="left:0px;top:286px;width:5px;height:21px;background:#f0f0f0;"></div>
<div style="left:6px;top:286px;width:43px;height:21px;background:#e1e1e1;"></div>
<div style="left:6px;top:286px;width:43px;height:1px;background:#fff;"></div>
<div style="left:6px;top:286px;width:1px;height:21px;background:#fff;"></div>
<div style="left:50px;top:286px;width:896px;height:21px;background:#e3fee3;"></div>
<div style="left:947px;top:286px;width:179px;height:21px;background:#f0ffe2;"></div>
<div style="left:0px;top:307px;width:5px;height:1px;background:#909090;"></div>
<div style="left:6px;top:307px;width:43px;height:1px;background:#808080;"></div>
<div style="left:50px;top:307px;width:1077px;height:1px;background:#bebec2;"></div>
<span class="t" style="left:27.37px;top:286px;font-size:15.8px;line-height:21px;color:#000;transform:scaleX(1.0188) rotate(.05deg)">14</span>
<span class="t" style="left:54.00px;top:286px;font-size:15.8px;line-height:21px;color:#000;transform:scaleX(0.9975) rotate(.05deg)">360402</span>
<span class="t c" style="left:190.90px;top:286px;font-size:13.4px;line-height:21px;color:#000;letter-spacing:0px;transform:translateY(0px) scaleX(1.12)">濂溪区</span>
<span class="t c" style="left:499.40px;top:286px;font-size:13.4px;line-height:21px;color:#000;letter-spacing:0px;transform:translateY(0px) scaleX(1.12)">国家省外异地</span>
<span class="t" style="left:612.30px;top:286px;font-size:15.8px;line-height:21px;color:#000;transform:scaleX(1.0822) rotate(.05deg)">lxq</span>
<span class="t" style="left:773.40px;top:286px;font-size:15.8px;line-height:21px;color:#000;transform:scaleX(1.0549) rotate(.05deg)">iia</span>
<div style="left:482px;top:288px;width:11px;height:9px;background:#efefef;"></div>
<div style="left:484px;top:292px;width:1.4px;height:1.4px;background:#111;"></div>
<div style="left:487px;top:292px;width:1.4px;height:1.4px;background:#111;"></div>
<div style="left:490px;top:292px;width:1.4px;height:1.4px;background:#111;"></div>
<div style="left:595px;top:288px;width:11px;height:9px;background:#efefef;"></div>
<div style="left:597px;top:292px;width:1.4px;height:1.4px;background:#111;"></div>
<div style="left:600px;top:292px;width:1.4px;height:1.4px;background:#111;"></div>
<div style="left:603px;top:292px;width:1.4px;height:1.4px;background:#111;"></div>
<div style="left:756px;top:288px;width:11px;height:9px;background:#efefef;"></div>
<div style="left:758px;top:292px;width:1.4px;height:1.4px;background:#111;"></div>
<div style="left:761px;top:292px;width:1.4px;height:1.4px;background:#111;"></div>
<div style="left:764px;top:292px;width:1.4px;height:1.4px;background:#111;"></div>
<div style="left:933px;top:288px;width:11px;height:9px;background:#efefef;"></div>
<div style="left:935px;top:292px;width:1.4px;height:1.4px;background:#111;"></div>
<div style="left:938px;top:292px;width:1.4px;height:1.4px;background:#111;"></div>
<div style="left:941px;top:292px;width:1.4px;height:1.4px;background:#111;"></div>
<div style="left:0px;top:308px;width:5px;height:21px;background:#f0f0f0;"></div>
<div style="left:6px;top:308px;width:43px;height:21px;background:#e1e1e1;"></div>
<div style="left:6px;top:308px;width:43px;height:1px;background:#fff;"></div>
<div style="left:6px;top:308px;width:1px;height:21px;background:#fff;"></div>
<div style="left:947px;top:308px;width:179px;height:21px;background:#ffffe3;"></div>
<div style="left:0px;top:329px;width:5px;height:1px;background:#909090;"></div>
<div style="left:6px;top:329px;width:43px;height:1px;background:#808080;"></div>
<div style="left:50px;top:329px;width:1077px;height:1px;background:#bebec2;"></div>
<span class="t" style="left:27.37px;top:308px;font-size:15.8px;line-height:21px;color:#000;transform:scaleX(1.0188) rotate(.05deg)">15</span>
<span class="t" style="left:54.00px;top:308px;font-size:15.8px;line-height:21px;color:#000;transform:scaleX(0.9975) rotate(.05deg)">370744</span>
<span class="t c" style="left:190.90px;top:308px;font-size:13.4px;line-height:21px;color:#000;letter-spacing:0px;transform:translateY(0px) scaleX(1.12)">综合保税区</span>
<span class="t c" style="left:499.40px;top:308px;font-size:13.4px;line-height:21px;color:#000;letter-spacing:0px;transform:translateY(0px) scaleX(1.12)">国家省外异地</span>
<span class="t" style="left:612.30px;top:308px;font-size:15.8px;line-height:21px;color:#000;transform:scaleX(1.0420) rotate(.05deg)">zhbsq</span>
<span class="t" style="left:773.40px;top:308px;font-size:15.8px;line-height:21px;color:#000;transform:scaleX(1.0466) rotate(.05deg)">xwwta</span>
<div style="left:482px;top:310px;width:11px;height:9px;background:#efefef;"></div>
<div style="left:484px;top:314px;width:1.4px;height:1.4px;background:#111;"></div>
<div style="left:487px;top:314px;width:1.4px;height:1.4px;background:#111;"></div>
<div style="left:490px;top:314px;width:1.4px;height:1.4px;background:#111;"></div>
<div style="left:595px;top:310px;width:11px;height:9px;background:#efefef;"></div>
<div style="left:597px;top:314px;width:1.4px;height:1.4px;background:#111;"></div>
<div style="left:600px;top:314px;width:1.4px;height:1.4px;background:#111;"></div>
<div style="left:603px;top:314px;width:1.4px;height:1.4px;background:#111;"></div>
<div style="left:756px;top:310px;width:11px;height:9px;background:#efefef;"></div>
<div style="left:758px;top:314px;width:1.4px;height:1.4px;background:#111;"></div>
<div style="left:761px;top:314px;width:1.4px;height:1.4px;background:#111;"></div>
<div style="left:764px;top:314px;width:1.4px;height:1.4px;background:#111;"></div>
<div style="left:933px;top:310px;width:11px;height:9px;background:#efefef;"></div>
<div style="left:935px;top:314px;width:1.4px;height:1.4px;background:#111;"></div>
<div style="left:938px;top:314px;width:1.4px;height:1.4px;background:#111;"></div>
<div style="left:941px;top:314px;width:1.4px;height:1.4px;background:#111;"></div>
<div style="left:0px;top:330px;width:5px;height:21px;background:#f0f0f0;"></div>
<div style="left:6px;top:330px;width:43px;height:21px;background:#e1e1e1;"></div>
<div style="left:6px;top:330px;width:43px;height:1px;background:#fff;"></div>
<div style="left:6px;top:330px;width:1px;height:21px;background:#fff;"></div>
<div style="left:50px;top:330px;width:896px;height:21px;background:#e3fee3;"></div>
<div style="left:947px;top:330px;width:179px;height:21px;background:#f0ffe2;"></div>
<div style="left:0px;top:351px;width:5px;height:1px;background:#909090;"></div>
<div style="left:6px;top:351px;width:43px;height:1px;background:#808080;"></div>
<div style="left:50px;top:351px;width:1077px;height:1px;background:#bebec2;"></div>
<span class="t" style="left:27.37px;top:330px;font-size:15.8px;line-height:21px;color:#000;transform:scaleX(1.0188) rotate(.05deg)">16</span>
<span class="t" style="left:54.00px;top:330px;font-size:15.8px;line-height:21px;color:#000;transform:scaleX(0.9975) rotate(.05deg)">371427</span>
<span class="t c" style="left:190.90px;top:330px;font-size:13.4px;line-height:21px;color:#000;letter-spacing:0px;transform:translateY(0px) scaleX(1.12)">夏津县</span>
<span class="t c" style="left:499.40px;top:330px;font-size:13.4px;line-height:21px;color:#000;letter-spacing:0px;transform:translateY(0px) scaleX(1.12)">国家省外异地</span>
<span class="t" style="left:612.30px;top:330px;font-size:15.8px;line-height:21px;color:#000;transform:scaleX(1.0035) rotate(.05deg)">xjx</span>
<span class="t" style="left:773.40px;top:330px;font-size:15.8px;line-height:21px;color:#000;transform:scaleX(1.0769) rotate(.05deg)">die</span>
<div style="left:482px;top:332px;width:11px;height:9px;background:#efefef;"></div>
<div style="left:484px;top:336px;width:1.4px;height:1.4px;background:#111;"></div>
<div style="left:487px;top:336px;width:1.4px;height:1.4px;background:#111;"></div>
<div style="left:490px;top:336px;width:1.4px;height:1.4px;background:#111;"></div>
<div style="left:595px;top:332px;width:11px;height:9px;background:#efefef;"></div>
<div style="left:597px;top:336px;width:1.4px;height:1.4px;background:#111;"></div>
<div style="left:600px;top:336px;width:1.4px;height:1.4px;background:#111;"></div>
<div style="left:603px;top:336px;width:1.4px;height:1.4px;background:#111;"></div>
<div style="left:756px;top:332px;width:11px;height:9px;background:#efefef;"></div>
<div style="left:758px;top:336px;width:1.4px;height:1.4px;background:#111;"></div>
<div style="left:761px;top:336px;width:1.4px;height:1.4px;background:#111;"></div>
<div style="left:764px;top:336px;width:1.4px;height:1.4px;background:#111;"></div>
<div style="left:933px;top:332px;width:11px;height:9px;background:#efefef;"></div>
<div style="left:935px;top:336px;width:1.4px;height:1.4px;background:#111;"></div>
<div style="left:938px;top:336px;width:1.4px;height:1.4px;background:#111;"></div>
<div style="left:941px;top:336px;width:1.4px;height:1.4px;background:#111;"></div>
<div style="left:0px;top:352px;width:5px;height:21px;background:#f0f0f0;"></div>
<div style="left:6px;top:352px;width:43px;height:21px;background:#e1e1e1;"></div>
<div style="left:6px;top:352px;width:43px;height:1px;background:#fff;"></div>
<div style="left:6px;top:352px;width:1px;height:21px;background:#fff;"></div>
<div style="left:947px;top:352px;width:179px;height:21px;background:#ffffe3;"></div>
<div style="left:0px;top:373px;width:5px;height:1px;background:#909090;"></div>
<div style="left:6px;top:373px;width:43px;height:1px;background:#808080;"></div>
<div style="left:50px;top:373px;width:1077px;height:1px;background:#bebec2;"></div>
<span class="t" style="left:27.37px;top:352px;font-size:15.8px;line-height:21px;color:#000;transform:scaleX(1.0188) rotate(.05deg)">17</span>
<span class="t" style="left:54.00px;top:352px;font-size:15.8px;line-height:21px;color:#000;transform:scaleX(0.9975) rotate(.05deg)">371723</span>
<span class="t c" style="left:190.90px;top:352px;font-size:13.4px;line-height:21px;color:#000;letter-spacing:0px;transform:translateY(0px) scaleX(1.12)">成武县</span>
<span class="t c" style="left:499.40px;top:352px;font-size:13.4px;line-height:21px;color:#000;letter-spacing:0px;transform:translateY(0px) scaleX(1.12)">国家省外异地</span>
<span class="t" style="left:612.30px;top:352px;font-size:15.8px;line-height:21px;color:#000;transform:scaleX(1.0137) rotate(.05deg)">cwx</span>
<span class="t" style="left:773.40px;top:352px;font-size:15.8px;line-height:21px;color:#000;transform:scaleX(1.0813) rotate(.05deg)">dge</span>
<div style="left:482px;top:354px;width:11px;height:9px;background:#efefef;"></div>
<div style="left:484px;top:358px;width:1.4px;height:1.4px;background:#111;"></div>
<div style="left:487px;top:358px;width:1.4px;height:1.4px;background:#111;"></div>
<div style="left:490px;top:358px;width:1.4px;height:1.4px;background:#111;"></div>
<div style="left:595px;top:354px;width:11px;height:9px;background:#efefef;"></div>
<div style="left:597px;top:358px;width:1.4px;height:1.4px;background:#111;"></div>
<div style="left:600px;top:358px;width:1.4px;height:1.4px;background:#111;"></div>
<div style="left:603px;top:358px;width:1.4px;height:1.4px;background:#111;"></div>
<div style="left:756px;top:354px;width:11px;height:9px;background:#efefef;"></div>
<div style="left:758px;top:358px;width:1.4px;height:1.4px;background:#111;"></div>
<div style="left:761px;top:358px;width:1.4px;height:1.4px;background:#111;"></div>
<div style="left:764px;top:358px;width:1.4px;height:1.4px;background:#111;"></div>
<div style="left:933px;top:354px;width:11px;height:9px;background:#efefef;"></div>
<div style="left:935px;top:358px;width:1.4px;height:1.4px;background:#111;"></div>
<div style="left:938px;top:358px;width:1.4px;height:1.4px;background:#111;"></div>
<div style="left:941px;top:358px;width:1.4px;height:1.4px;background:#111;"></div>
<div style="left:0px;top:374px;width:5px;height:21px;background:#f0f0f0;"></div>
<div style="left:6px;top:374px;width:43px;height:21px;background:#e1e1e1;"></div>
<div style="left:6px;top:374px;width:43px;height:1px;background:#fff;"></div>
<div style="left:6px;top:374px;width:1px;height:21px;background:#fff;"></div>
<div style="left:50px;top:374px;width:896px;height:21px;background:#e3fee3;"></div>
<div style="left:947px;top:374px;width:179px;height:21px;background:#f0ffe2;"></div>
<div style="left:0px;top:395px;width:5px;height:1px;background:#909090;"></div>
<div style="left:6px;top:395px;width:43px;height:1px;background:#808080;"></div>
<div style="left:50px;top:395px;width:1077px;height:1px;background:#bebec2;"></div>
<span class="t" style="left:27.37px;top:374px;font-size:15.8px;line-height:21px;color:#000;transform:scaleX(1.0188) rotate(.05deg)">18</span>
<span class="t" style="left:54.00px;top:374px;font-size:15.8px;line-height:21px;color:#000;transform:scaleX(0.9975) rotate(.05deg)">410304</span>
<span class="t c" style="left:190.90px;top:374px;font-size:13.4px;line-height:21px;color:#000;letter-spacing:0px;transform:translateY(0px) scaleX(1.12)">瀍河回族区</span>
<span class="t c" style="left:499.40px;top:374px;font-size:13.4px;line-height:21px;color:#000;letter-spacing:0px;transform:translateY(0px) scaleX(1.12)">国家省外异地</span>
<span class="t" style="left:612.30px;top:374px;font-size:15.8px;line-height:21px;color:#000;transform:scaleX(1.0673) rotate(.05deg)">hhzq</span>
<span class="t" style="left:773.40px;top:374px;font-size:15.8px;line-height:21px;color:#000;transform:scaleX(1.0479) rotate(.05deg)">ilya</span>
<div style="left:482px;top:376px;width:11px;height:9px;background:#efefef;"></div>
<div style="left:484px;top:380px;width:1.4px;height:1.4px;background:#111;"></div>
<div style="left:487px;top:380px;width:1.4px;height:1.4px;background:#111;"></div>
<div style="left:490px;top:380px;width:1.4px;height:1.4px;background:#111;"></div>
<div style="left:595px;top:376px;width:11px;height:9px;background:#efefef;"></div>
<div style="left:597px;top:380px;width:1.4px;height:1.4px;background:#111;"></div>
<div style="left:600px;top:380px;width:1.4px;height:1.4px;background:#111;"></div>
<div style="left:603px;top:380px;width:1.4px;height:1.4px;background:#111;"></div>
<div style="left:756px;top:376px;width:11px;height:9px;background:#efefef;"></div>
<div style="left:758px;top:380px;width:1.4px;height:1.4px;background:#111;"></div>
<div style="left:761px;top:380px;width:1.4px;height:1.4px;background:#111;"></div>
<div style="left:764px;top:380px;width:1.4px;height:1.4px;background:#111;"></div>
<div style="left:933px;top:376px;width:11px;height:9px;background:#efefef;"></div>
<div style="left:935px;top:380px;width:1.4px;height:1.4px;background:#111;"></div>
<div style="left:938px;top:380px;width:1.4px;height:1.4px;background:#111;"></div>
<div style="left:941px;top:380px;width:1.4px;height:1.4px;background:#111;"></div>
<div style="left:0px;top:396px;width:5px;height:21px;background:#f0f0f0;"></div>
<div style="left:6px;top:396px;width:43px;height:21px;background:#e1e1e1;"></div>
<div style="left:6px;top:396px;width:43px;height:1px;background:#fff;"></div>
<div style="left:6px;top:396px;width:1px;height:21px;background:#fff;"></div>
<div style="left:947px;top:396px;width:179px;height:21px;background:#ffffe3;"></div>
<div style="left:0px;top:417px;width:5px;height:1px;background:#909090;"></div>
<div style="left:6px;top:417px;width:43px;height:1px;background:#808080;"></div>
<div style="left:50px;top:417px;width:1077px;height:1px;background:#bebec2;"></div>
<span class="t" style="left:27.37px;top:396px;font-size:15.8px;line-height:21px;color:#000;transform:scaleX(1.0188) rotate(.05deg)">19</span>
<span class="t" style="left:54.00px;top:396px;font-size:15.8px;line-height:21px;color:#000;transform:scaleX(1.0473) rotate(.05deg)">430111</span>
<span class="t c" style="left:190.90px;top:396px;font-size:13.4px;line-height:21px;color:#000;letter-spacing:0px;transform:translateY(0px) scaleX(1.12)">雨花区</span>
<span class="t c" style="left:499.40px;top:396px;font-size:13.4px;line-height:21px;color:#000;letter-spacing:0px;transform:translateY(0px) scaleX(1.12)">国家省外异地</span>
<span class="t" style="left:612.30px;top:396px;font-size:15.8px;line-height:21px;color:#000;transform:scaleX(1.0840) rotate(.05deg)">yhq</span>
<span class="t" style="left:773.40px;top:396px;font-size:15.8px;line-height:21px;color:#000;transform:scaleX(1.0185) rotate(.05deg)">faa</span>
<div style="left:482px;top:398px;width:11px;height:9px;background:#efefef;"></div>
<div style="left:484px;top:402px;width:1.4px;height:1.4px;background:#111;"></div>
<div style="left:487px;top:402px;width:1.4px;height:1.4px;background:#111;"></div>
<div style="left:490px;top:402px;width:1.4px;height:1.4px;background:#111;"></div>
<div style="left:595px;top:398px;width:11px;height:9px;background:#efefef;"></div>
<div style="left:597px;top:402px;width:1.4px;height:1.4px;background:#111;"></div>
<div style="left:600px;top:402px;width:1.4px;height:1.4px;background:#111;"></div>
<div style="left:603px;top:402px;width:1.4px;height:1.4px;background:#111;"></div>
<div style="left:756px;top:398px;width:11px;height:9px;background:#efefef;"></div>
<div style="left:758px;top:402px;width:1.4px;height:1.4px;background:#111;"></div>
<div style="left:761px;top:402px;width:1.4px;height:1.4px;background:#111;"></div>
<div style="left:764px;top:402px;width:1.4px;height:1.4px;background:#111;"></div>
<div style="left:933px;top:398px;width:11px;height:9px;background:#efefef;"></div>
<div style="left:935px;top:402px;width:1.4px;height:1.4px;background:#111;"></div>
<div style="left:938px;top:402px;width:1.4px;height:1.4px;background:#111;"></div>
<div style="left:941px;top:402px;width:1.4px;height:1.4px;background:#111;"></div>
<div style="left:0px;top:418px;width:5px;height:21px;background:#f0f0f0;"></div>
<div style="left:6px;top:418px;width:43px;height:21px;background:#e1e1e1;"></div>
<div style="left:6px;top:418px;width:43px;height:1px;background:#fff;"></div>
<div style="left:6px;top:418px;width:1px;height:21px;background:#fff;"></div>
<div style="left:50px;top:418px;width:896px;height:21px;background:#e3fee3;"></div>
<div style="left:947px;top:418px;width:179px;height:21px;background:#f0ffe2;"></div>
<div style="left:0px;top:439px;width:5px;height:1px;background:#909090;"></div>
<div style="left:6px;top:439px;width:43px;height:1px;background:#808080;"></div>
<div style="left:50px;top:439px;width:1077px;height:1px;background:#bebec2;"></div>
<span class="t" style="left:27.37px;top:418px;font-size:15.8px;line-height:21px;color:#000;transform:scaleX(1.0188) rotate(.05deg)">20</span>
<span class="t" style="left:54.00px;top:418px;font-size:15.8px;line-height:21px;color:#000;transform:scaleX(0.9975) rotate(.05deg)">430409</span>
<span class="t c" style="left:190.90px;top:418px;font-size:13.4px;line-height:21px;color:#000;letter-spacing:0px;transform:translateY(0px) scaleX(1.12)">高新技术开发区</span>
<span class="t c" style="left:499.40px;top:418px;font-size:13.4px;line-height:21px;color:#000;letter-spacing:0px;transform:translateY(0px) scaleX(1.12)">国家省外异地</span>
<span class="t" style="left:612.30px;top:418px;font-size:15.8px;line-height:21px;color:#000;transform:scaleX(1.0689) rotate(.05deg)">gxjskfq</span>
<span class="t" style="left:773.40px;top:418px;font-size:15.8px;line-height:21px;color:#000;transform:scaleX(1.0313) rotate(.05deg)">yursgva</span>
<div style="left:482px;top:420px;width:11px;height:9px;background:#efefef;"></div>
<div style="left:484px;top:424px;width:1.4px;height:1.4px;background:#111;"></div>
<div style="left:487px;top:424px;width:1.4px;height:1.4px;background:#111;"></div>
<div style="left:490px;top:424px;width:1.4px;height:1.4px;background:#111;"></div>
<div style="left:595px;top:420px;width:11px;height:9px;background:#efefef;"></div>
<div style="left:597px;top:424px;width:1.4px;height:1.4px;background:#111;"></div>
<div style="left:600px;top:424px;width:1.4px;height:1.4px;background:#111;"></div>
<div style="left:603px;top:424px;width:1.4px;height:1.4px;background:#111;"></div>
<div style="left:756px;top:420px;width:11px;height:9px;background:#efefef;"></div>
<div style="left:758px;top:424px;width:1.4px;height:1.4px;background:#111;"></div>
<div style="left:761px;top:424px;width:1.4px;height:1.4px;background:#111;"></div>
<div style="left:764px;top:424px;width:1.4px;height:1.4px;background:#111;"></div>
<div style="left:933px;top:420px;width:11px;height:9px;background:#efefef;"></div>
<div style="left:935px;top:424px;width:1.4px;height:1.4px;background:#111;"></div>
<div style="left:938px;top:424px;width:1.4px;height:1.4px;background:#111;"></div>
<div style="left:941px;top:424px;width:1.4px;height:1.4px;background:#111;"></div>
<div style="left:0px;top:440px;width:5px;height:21px;background:#f0f0f0;"></div>
<div style="left:6px;top:440px;width:43px;height:21px;background:#e1e1e1;"></div>
<div style="left:6px;top:440px;width:43px;height:1px;background:#fff;"></div>
<div style="left:6px;top:440px;width:1px;height:21px;background:#fff;"></div>
<div style="left:947px;top:440px;width:179px;height:21px;background:#ffffe3;"></div>
<div style="left:0px;top:461px;width:5px;height:1px;background:#909090;"></div>
<div style="left:6px;top:461px;width:43px;height:1px;background:#808080;"></div>
<div style="left:50px;top:461px;width:1077px;height:1px;background:#bebec2;"></div>
<span class="t" style="left:27.37px;top:440px;font-size:15.8px;line-height:21px;color:#000;transform:scaleX(1.0188) rotate(.05deg)">21</span>
<span class="t" style="left:54.00px;top:440px;font-size:15.8px;line-height:21px;color:#000;transform:scaleX(0.9975) rotate(.05deg)">440513</span>
<span class="t c" style="left:190.90px;top:440px;font-size:13.4px;line-height:21px;color:#000;letter-spacing:0px;transform:translateY(0px) scaleX(1.12)">潮阳区</span>
<span class="t c" style="left:499.40px;top:440px;font-size:13.4px;line-height:21px;color:#000;letter-spacing:0px;transform:translateY(0px) scaleX(1.12)">国家省外异地</span>
<span class="t" style="left:612.30px;top:440px;font-size:15.8px;line-height:21px;color:#000;transform:scaleX(1.0395) rotate(.05deg)">cyq</span>
<span class="t" style="left:773.40px;top:440px;font-size:15.8px;line-height:21px;color:#000;transform:scaleX(1.0659) rotate(.05deg)">iba</span>
<div style="left:482px;top:442px;width:11px;height:9px;background:#efefef;"></div>
<div style="left:484px;top:446px;width:1.4px;height:1.4px;background:#111;"></div>
<div style="left:487px;top:446px;width:1.4px;height:1.4px;background:#111;"></div>
<div style="left:490px;top:446px;width:1.4px;height:1.4px;background:#111;"></div>
<div style="left:595px;top:442px;width:11px;height:9px;background:#efefef;"></div>
<div style="left:597px;top:446px;width:1.4px;height:1.4px;background:#111;"></div>
<div style="left:600px;top:446px;width:1.4px;height:1.4px;background:#111;"></div>
<div style="left:603px;top:446px;width:1.4px;height:1.4px;background:#111;"></div>
<div style="left:756px;top:442px;width:11px;height:9px;background:#efefef;"></div>
<div style="left:758px;top:446px;width:1.4px;height:1.4px;background:#111;"></div>
<div style="left:761px;top:446px;width:1.4px;height:1.4px;background:#111;"></div>
<div style="left:764px;top:446px;width:1.4px;height:1.4px;background:#111;"></div>
<div style="left:933px;top:442px;width:11px;height:9px;background:#efefef;"></div>
<div style="left:935px;top:446px;width:1.4px;height:1.4px;background:#111;"></div>
<div style="left:938px;top:446px;width:1.4px;height:1.4px;background:#111;"></div>
<div style="left:941px;top:446px;width:1.4px;height:1.4px;background:#111;"></div>
<div style="left:0px;top:462px;width:5px;height:21px;background:#f0f0f0;"></div>
<div style="left:6px;top:462px;width:43px;height:21px;background:#e1e1e1;"></div>
<div style="left:6px;top:462px;width:43px;height:1px;background:#fff;"></div>
<div style="left:6px;top:462px;width:1px;height:21px;background:#fff;"></div>
<div style="left:50px;top:462px;width:896px;height:21px;background:#e3fee3;"></div>
<div style="left:947px;top:462px;width:179px;height:21px;background:#f0ffe2;"></div>
<div style="left:0px;top:483px;width:5px;height:1px;background:#909090;"></div>
<div style="left:6px;top:483px;width:43px;height:1px;background:#808080;"></div>
<div style="left:50px;top:483px;width:1077px;height:1px;background:#bebec2;"></div>
<span class="t" style="left:27.37px;top:462px;font-size:15.8px;line-height:21px;color:#000;transform:scaleX(1.0188) rotate(.05deg)">22</span>
<span class="t" style="left:54.00px;top:462px;font-size:15.8px;line-height:21px;color:#000;transform:scaleX(0.9975) rotate(.05deg)">441700</span>
<span class="t c" style="left:190.90px;top:462px;font-size:13.4px;line-height:21px;color:#000;letter-spacing:0px;transform:translateY(0px) scaleX(1.12)">阳江市</span>
<span class="t c" style="left:499.40px;top:462px;font-size:13.4px;line-height:21px;color:#000;letter-spacing:0px;transform:translateY(0px) scaleX(1.12)">国家省外异地</span>
<span class="t" style="left:612.30px;top:462px;font-size:15.8px;line-height:21px;color:#000;transform:scaleX(0.9908) rotate(.05deg)">yjs</span>
<span class="t" style="left:773.40px;top:462px;font-size:15.8px;line-height:21px;color:#000;transform:scaleX(1.0854) rotate(.05deg)">biy</span>
<div style="left:482px;top:464px;width:11px;height:9px;background:#efefef;"></div>
<div style="left:484px;top:468px;width:1.4px;height:1.4px;background:#111;"></div>
<div style="left:487px;top:468px;width:1.4px;height:1.4px;background:#111;"></div>
<div style="left:490px;top:468px;width:1.4px;height:1.4px;background:#111;"></div>
<div style="left:595px;top:464px;width:11px;height:9px;background:#efefef;"></div>
<div style="left:597px;top:468px;width:1.4px;height:1.4px;background:#111;"></div>
<div style="left:600px;top:468px;width:1.4px;height:1.4px;background:#111;"></div>
<div style="left:603px;top:468px;width:1.4px;height:1.4px;background:#111;"></div>
<div style="left:756px;top:464px;width:11px;height:9px;background:#efefef;"></div>
<div style="left:758px;top:468px;width:1.4px;height:1.4px;background:#111;"></div>
<div style="left:761px;top:468px;width:1.4px;height:1.4px;background:#111;"></div>
<div style="left:764px;top:468px;width:1.4px;height:1.4px;background:#111;"></div>
<div style="left:933px;top:464px;width:11px;height:9px;background:#efefef;"></div>
<div style="left:935px;top:468px;width:1.4px;height:1.4px;background:#111;"></div>
<div style="left:938px;top:468px;width:1.4px;height:1.4px;background:#111;"></div>
<div style="left:941px;top:468px;width:1.4px;height:1.4px;background:#111;"></div>
<div style="left:0px;top:484px;width:5px;height:21px;background:#f0f0f0;"></div>
<div style="left:6px;top:484px;width:43px;height:21px;background:#e1e1e1;"></div>
<div style="left:6px;top:484px;width:43px;height:1px;background:#fff;"></div>
<div style="left:6px;top:484px;width:1px;height:21px;background:#fff;"></div>
<div style="left:947px;top:484px;width:179px;height:21px;background:#ffffe3;"></div>
<div style="left:0px;top:505px;width:5px;height:1px;background:#909090;"></div>
<div style="left:6px;top:505px;width:43px;height:1px;background:#808080;"></div>
<div style="left:50px;top:505px;width:1077px;height:1px;background:#bebec2;"></div>
<span class="t" style="left:27.37px;top:484px;font-size:15.8px;line-height:21px;color:#000;transform:scaleX(1.0188) rotate(.05deg)">23</span>
<span class="t" style="left:54.00px;top:484px;font-size:15.8px;line-height:21px;color:#000;transform:scaleX(0.9975) rotate(.05deg)">450800</span>
<span class="t c" style="left:190.90px;top:484px;font-size:13.4px;line-height:21px;color:#000;letter-spacing:0px;transform:translateY(0px) scaleX(1.12)">贵港市</span>
<span class="t c" style="left:499.40px;top:484px;font-size:13.4px;line-height:21px;color:#000;letter-spacing:0px;transform:translateY(0px) scaleX(1.12)">国家省外异地</span>
<span class="t" style="left:612.30px;top:484px;font-size:15.8px;line-height:21px;color:#000;transform:scaleX(1.0626) rotate(.05deg)">ggs</span>
<span class="t" style="left:773.40px;top:484px;font-size:15.8px;line-height:21px;color:#000;transform:scaleX(1.0537) rotate(.05deg)">kiy</span>
<div style="left:482px;top:486px;width:11px;height:9px;background:#efefef;"></div>
<div style="left:484px;top:490px;width:1.4px;height:1.4px;background:#111;"></div>
<div style="left:487px;top:490px;width:1.4px;height:1.4px;background:#111;"></div>
<div style="left:490px;top:490px;width:1.4px;height:1.4px;background:#111;"></div>
<div style="left:595px;top:486px;width:11px;height:9px;background:#efefef;"></div>
<div style="left:597px;top:490px;width:1.4px;height:1.4px;background:#111;"></div>
<div style="left:600px;top:490px;width:1.4px;height:1.4px;background:#111;"></div>
<div style="left:603px;top:490px;width:1.4px;height:1.4px;background:#111;"></div>
<div style="left:756px;top:486px;width:11px;height:9px;background:#efefef;"></div>
<div style="left:758px;top:490px;width:1.4px;height:1.4px;background:#111;"></div>
<div style="left:761px;top:490px;width:1.4px;height:1.4px;background:#111;"></div>
<div style="left:764px;top:490px;width:1.4px;height:1.4px;background:#111;"></div>
<div style="left:933px;top:486px;width:11px;height:9px;background:#efefef;"></div>
<div style="left:935px;top:490px;width:1.4px;height:1.4px;background:#111;"></div>
<div style="left:938px;top:490px;width:1.4px;height:1.4px;background:#111;"></div>
<div style="left:941px;top:490px;width:1.4px;height:1.4px;background:#111;"></div>
<div style="left:0px;top:506px;width:5px;height:21px;background:#f0f0f0;"></div>
<div style="left:6px;top:506px;width:43px;height:21px;background:#e1e1e1;"></div>
<div style="left:6px;top:506px;width:43px;height:1px;background:#fff;"></div>
<div style="left:6px;top:506px;width:1px;height:21px;background:#fff;"></div>
<div style="left:50px;top:506px;width:896px;height:21px;background:#e3fee3;"></div>
<div style="left:947px;top:506px;width:179px;height:21px;background:#f0ffe2;"></div>
<div style="left:0px;top:527px;width:5px;height:1px;background:#909090;"></div>
<div style="left:6px;top:527px;width:43px;height:1px;background:#808080;"></div>
<div style="left:50px;top:527px;width:1077px;height:1px;background:#bebec2;"></div>
<span class="t" style="left:27.37px;top:506px;font-size:15.8px;line-height:21px;color:#000;transform:scaleX(1.0188) rotate(.05deg)">24</span>
<span class="t" style="left:54.00px;top:506px;font-size:15.8px;line-height:21px;color:#000;transform:scaleX(1.0218) rotate(.05deg)">451103</span>
<span class="t c" style="left:190.90px;top:506px;font-size:13.4px;line-height:21px;color:#000;letter-spacing:0px;transform:translateY(0px) scaleX(1.12)">平桂区</span>
<span class="t c" style="left:499.40px;top:506px;font-size:13.4px;line-height:21px;color:#000;letter-spacing:0px;transform:translateY(0px) scaleX(1.12)">国家省外异地</span>
<span class="t" style="left:612.30px;top:506px;font-size:15.8px;line-height:21px;color:#000;transform:scaleX(1.1223) rotate(.05deg)">pgq</span>
<span class="t" style="left:773.40px;top:506px;font-size:15.8px;line-height:21px;color:#000;transform:scaleX(1.0002) rotate(.05deg)">gsa</span>
<div style="left:482px;top:508px;width:11px;height:9px;background:#efefef;"></div>
<div style="left:484px;top:512px;width:1.4px;height:1.4px;background:#111;"></div>
<div style="left:487px;top:512px;width:1.4px;height:1.4px;background:#111;"></div>
<div style="left:490px;top:512px;width:1.4px;height:1.4px;background:#111;"></div>
<div style="left:595px;top:508px;width:11px;height:9px;background:#efefef;"></div>
<div style="left:597px;top:512px;width:1.4px;height:1.4px;background:#111;"></div>
<div style="left:600px;top:512px;width:1.4px;height:1.4px;background:#111;"></div>
<div style="left:603px;top:512px;width:1.4px;height:1.4px;background:#111;"></div>
<div style="left:756px;top:508px;width:11px;height:9px;background:#efefef;"></div>
<div style="left:758px;top:512px;width:1.4px;height:1.4px;background:#111;"></div>
<div style="left:761px;top:512px;width:1.4px;height:1.4px;background:#111;"></div>
<div style="left:764px;top:512px;width:1.4px;height:1.4px;background:#111;"></div>
<div style="left:933px;top:508px;width:11px;height:9px;background:#efefef;"></div>
<div style="left:935px;top:512px;width:1.4px;height:1.4px;background:#111;"></div>
<div style="left:938px;top:512px;width:1.4px;height:1.4px;background:#111;"></div>
<div style="left:941px;top:512px;width:1.4px;height:1.4px;background:#111;"></div>
<div style="left:0px;top:528px;width:5px;height:21px;background:#f0f0f0;"></div>
<div style="left:6px;top:528px;width:43px;height:21px;background:#e1e1e1;"></div>
<div style="left:6px;top:528px;width:43px;height:1px;background:#fff;"></div>
<div style="left:6px;top:528px;width:1px;height:21px;background:#fff;"></div>
<div style="left:947px;top:528px;width:179px;height:21px;background:#ffffe3;"></div>
<div style="left:0px;top:549px;width:5px;height:1px;background:#909090;"></div>
<div style="left:6px;top:549px;width:43px;height:1px;background:#808080;"></div>
<div style="left:50px;top:549px;width:1077px;height:1px;background:#bebec2;"></div>
<span class="t" style="left:27.37px;top:528px;font-size:15.8px;line-height:21px;color:#000;transform:scaleX(1.0188) rotate(.05deg)">25</span>
<span class="t" style="left:54.00px;top:528px;font-size:15.8px;line-height:21px;color:#000;transform:scaleX(0.9975) rotate(.05deg)">510522</span>
<span class="t c" style="left:190.90px;top:528px;font-size:13.4px;line-height:21px;color:#000;letter-spacing:0px;transform:translateY(0px) scaleX(1.12)">合江县</span>
<span class="t c" style="left:499.40px;top:528px;font-size:13.4px;line-height:21px;color:#000;letter-spacing:0px;transform:translateY(0px) scaleX(1.12)">国家省外异地</span>
<span class="t" style="left:612.30px;top:528px;font-size:15.8px;line-height:21px;color:#000;transform:scaleX(1.0633) rotate(.05deg)">hjx</span>
<span class="t" style="left:773.66px;top:528px;font-size:15.8px;line-height:21px;color:#000;transform:scaleX(1.0500) rotate(.05deg)">wix</span>
<div style="left:482px;top:530px;width:11px;height:9px;background:#efefef;"></div>
<div style="left:484px;top:534px;width:1.4px;height:1.4px;background:#111;"></div>
<div style="left:487px;top:534px;width:1.4px;height:1.4px;background:#111;"></div>
<div style="left:490px;top:534px;width:1.4px;height:1.4px;background:#111;"></div>
<div style="left:595px;top:530px;width:11px;height:9px;background:#efefef;"></div>
<div style="left:597px;top:534px;width:1.4px;height:1.4px;background:#111;"></div>
<div style="left:600px;top:534px;width:1.4px;height:1.4px;background:#111;"></div>
<div style="left:603px;top:534px;width:1.4px;height:1.4px;background:#111;"></div>
<div style="left:756px;top:530px;width:11px;height:9px;background:#efefef;"></div>
<div style="left:758px;top:534px;width:1.4px;height:1.4px;background:#111;"></div>
<div style="left:761px;top:534px;width:1.4px;height:1.4px;background:#111;"></div>
<div style="left:764px;top:534px;width:1.4px;height:1.4px;background:#111;"></div>
<div style="left:933px;top:530px;width:11px;height:9px;background:#efefef;"></div>
<div style="left:935px;top:534px;width:1.4px;height:1.4px;background:#111;"></div>
<div style="left:938px;top:534px;width:1.4px;height:1.4px;background:#111;"></div>
<div style="left:941px;top:534px;width:1.4px;height:1.4px;background:#111;"></div>
</div>
<div style="left:49px;top:148px;width:1px;height:535px;background:#000;"></div>
<div style="left:187px;top:148px;width:1px;height:535px;background:#bebec2;"></div>
<div style="left:495px;top:148px;width:1px;height:535px;background:#bebec2;"></div>
<div style="left:608px;top:148px;width:1px;height:535px;background:#bebec2;"></div>
<div style="left:769px;top:148px;width:1px;height:535px;background:#bebec2;"></div>
<div style="left:946px;top:148px;width:1px;height:535px;background:#bebec2;"></div>
<div style="left:1126px;top:148px;width:1px;height:535px;background:#bebec2;"></div>
<svg style="left:0;top:153px" width="5" height="10"><path d="M0 1.5 L3.6 5 L0 8.5Z" fill="#000"/></svg>
<div style="left:0px;top:683px;width:1202px;height:1px;background:#fff;"></div>
<div style="left:0px;top:684px;width:1202px;height:1px;background:#a8a8ae;"></div>
<div style="left:0px;top:685px;width:1202px;height:33px;background:#f0f0f0;"></div>
<div style="left:0px;top:689px;width:1202px;height:2px;background:#f8f8f8;"></div>
<div style="left:0px;top:691px;width:1202px;height:1px;background:#dadada;"></div>
<div style="left:0px;top:692px;width:1202px;height:1px;background:#f5f5f5;"></div>
<div style="left:0px;top:693px;width:1202px;height:1px;background:#dadada;"></div>
<div style="left:0px;top:715px;width:1202px;height:1px;background:#8c8c8c;"></div>
<div style="left:2px;top:695px;width:1px;height:16px;background:#8a8a8a;"></div>
<div style="left:2px;top:695px;width:7px;height:1px;background:#9a9a9a;"></div>
<div style="left:9px;top:696px;width:1px;height:15px;background:#fff;"></div>
<div style="left:3px;top:710px;width:7px;height:1px;background:#fff;"></div>
<div style="left:30px;top:695px;width:1px;height:17px;background:#cfcfcf;"></div>
<div style="left:119px;top:695px;width:1px;height:17px;background:#cfcfcf;"></div>
<div style="left:189px;top:695px;width:1px;height:17px;background:#cfcfcf;"></div>
<span class="t" style="left:39.4px;top:695px;font-family:'Liberation Serif',serif;font-weight:bold;font-size:14.5px;line-height:18px;color:#2f6aad;transform:scaleX(.78)">&amp;</span>
<span class="t" style="left:60.00px;top:695px;font-size:12px;line-height:17px;color:#000;transform:scaleX(0.9067) rotate(.05deg)">49:24</span>
<span class="t" style="left:164.30px;top:695px;font-size:12px;line-height:17px;color:#000;transform:scaleX(0.8860) rotate(.05deg)">0:02</span>
<span class="t" style="left:211.20px;top:695px;font-size:12px;line-height:17px;color:#000;transform:scaleX(0.9659) rotate(.05deg)">sd_hospital@orcl</span>
<span class="t" style="left:389.40px;top:695px;font-size:12px;line-height:17px;color:#000;transform:scaleX(0.9371) rotate(.05deg)">[17:11:58]</span>
<span class="t" style="left:445.30px;top:695px;font-size:12px;line-height:17px;color:#000;transform:scaleX(0.8972) rotate(.05deg)">4030</span>
<span class="t c" style="left:472.00px;top:696px;font-size:13px;line-height:16px;color:#000;letter-spacing:0px;transform:translateY(0px) scaleX(1)">行被选择，耗时</span>
<span class="t" style="left:566.40px;top:695px;font-size:12px;line-height:17px;color:#000;transform:scaleX(0.8700) rotate(.05deg)">2.850</span>
<span class="t c" style="left:595.50px;top:696px;font-size:13px;line-height:16px;color:#000;letter-spacing:0px;transform:translateY(0px) scaleX(1)">秒</span>
<svg style="left:368px;top:696px" width="15" height="14" viewBox="368 696 15 14"><path d="M369 702.3h4.2V698l2.6 2.9h4.3v-1.5h0.9v7.2h-0.9v-1.7h-4.3l-2.6 3.1V703.8h-4.2z" fill="#808080"/></svg>
<svg style="left:14px;top:696px" width="16" height="16" viewBox="14 696 16 16"><path d="M17.6 700.8a4.2 4.2 0 1 0 5.6 -0.9" fill="none" stroke="#3a72b4" stroke-width="2.2"/><path d="M15.6 699.2h4.4v4.2z" fill="#3a72b4"/><path d="M22.2 699l4 2.4-4 2.5z" fill="#d80a10"/></svg>
<svg style="left:194px;top:698px" width="12" height="9" viewBox="194 698 12 9"><path d="M195.4 700.2h8.8l-4.4 5z" fill="#4a7ebb"/></svg>
<svg style="left:0;top:0" width="1202" height="718"><path d="M422.3 622.3L447 672.3L449.9 670.2L448.7 688.7L435.5 676.1L439.9 674.2Z" fill="#f93a3d"/></svg>
</body></html>
